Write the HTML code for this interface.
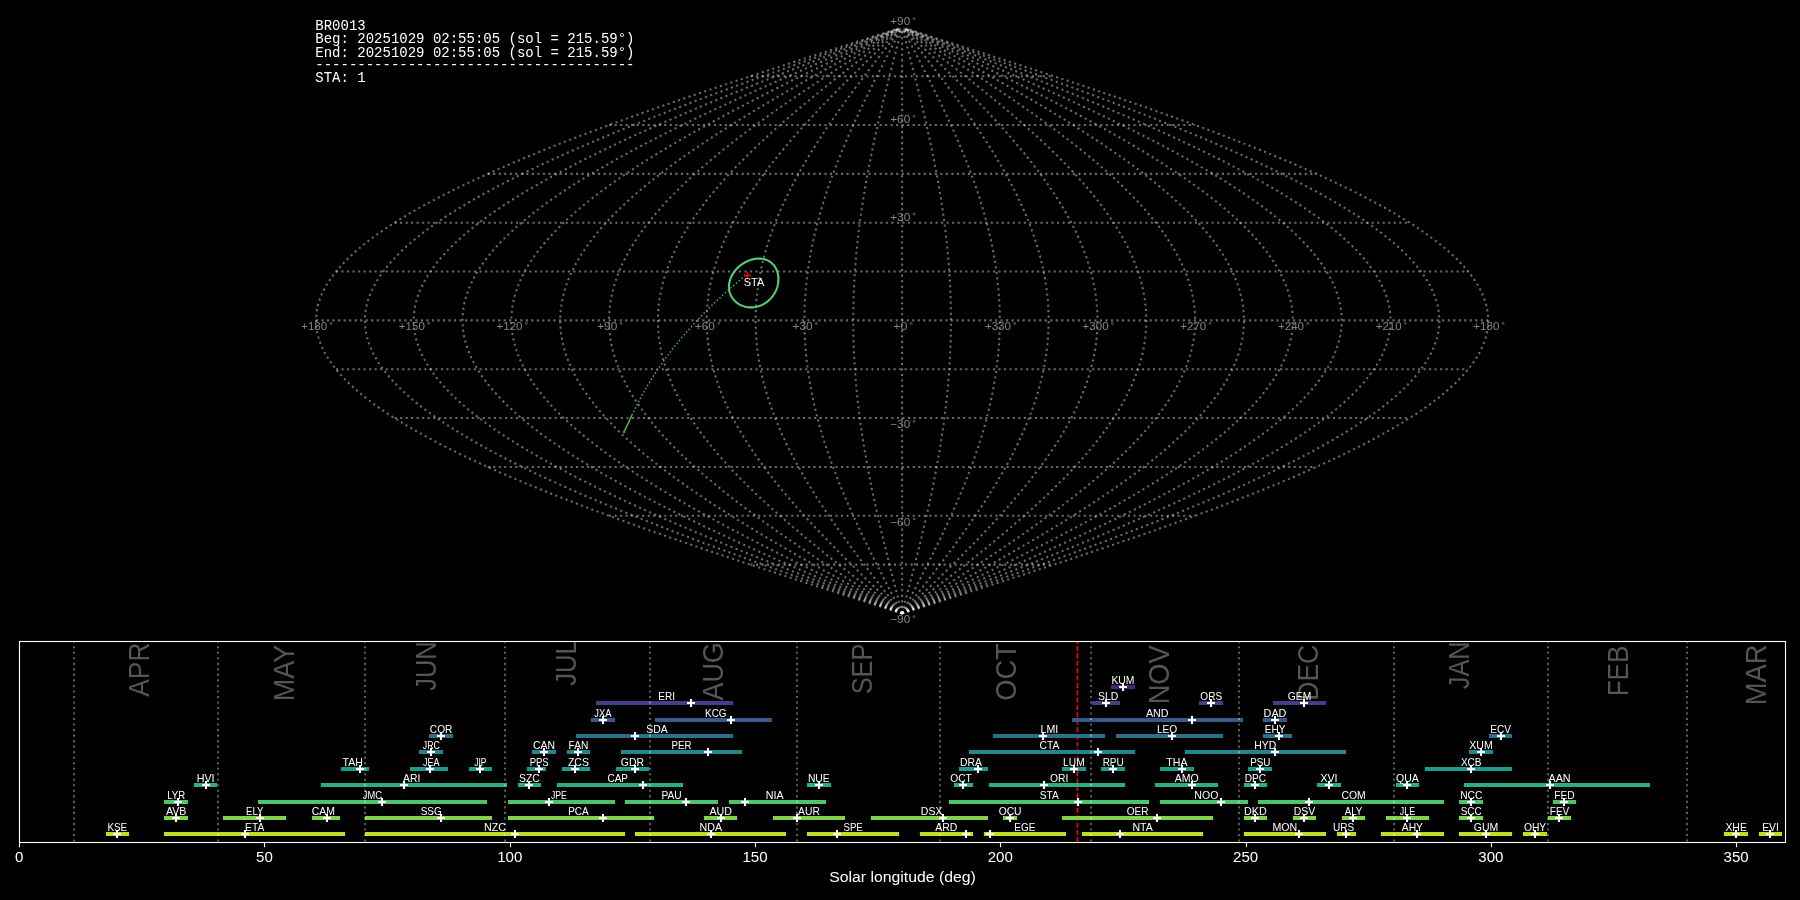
<!DOCTYPE html><html><head><meta charset="utf-8"><style>html,body{margin:0;padding:0;background:#000;width:1800px;height:900px;overflow:hidden}svg{display:block;will-change:transform}text{font-family:"Liberation Sans",sans-serif}</style></head><body>
<svg width="1800" height="900" viewBox="0 0 1800 900">
<rect width="1800" height="900" fill="#000"/>
<text x="315.3" y="30"  font-size="15.0" fill="#fff" textLength="50.4" lengthAdjust="spacingAndGlyphs" style="font-family:'Liberation Mono',monospace">BR0013</text>
<text x="315.3" y="43"  font-size="15.0" fill="#fff" textLength="319.2" lengthAdjust="spacingAndGlyphs" style="font-family:'Liberation Mono',monospace">Beg: 20251029 02:55:05 (sol = 215.59°)</text>
<text x="315.3" y="56.6"  font-size="15.0" fill="#fff" textLength="319.2" lengthAdjust="spacingAndGlyphs" style="font-family:'Liberation Mono',monospace">End: 20251029 02:55:05 (sol = 215.59°)</text>
<text x="315.3" y="69"  font-size="15.0" fill="#fff" textLength="319.2" lengthAdjust="spacingAndGlyphs" style="font-family:'Liberation Mono',monospace">--------------------------------------</text>
<text x="315.3" y="82"  font-size="15.0" fill="#fff" textLength="50.4" lengthAdjust="spacingAndGlyphs" style="font-family:'Liberation Mono',monospace">STA: 1</text>
<g fill="none" stroke="#ffffff" stroke-opacity="0.42" stroke-width="2.08" stroke-dasharray="2.083 3.4375">
<path d="M902.1,613.44 L912.31,610.19 L922.51,606.94 L932.71,603.69 L942.9,600.44 L953.08,597.19 L963.24,593.94 L973.39,590.69 L983.51,587.44 L993.61,584.19 L1003.68,580.94 L1013.71,577.69 L1023.72,574.44 L1033.69,571.19 L1043.62,567.94 L1053.5,564.69 L1063.34,561.45 L1073.13,558.2 L1082.87,554.95 L1092.55,551.7 L1102.18,548.45 L1111.74,545.2 L1121.24,541.95 L1130.68,538.7 L1140.04,535.45 L1149.34,532.2 L1158.56,528.95 L1167.7,525.7 L1176.76,522.45 L1185.73,519.2 L1194.62,515.95 L1203.42,512.7 L1212.14,509.45 L1220.75,506.2 L1229.27,502.95 L1237.69,499.7 L1246.01,496.45 L1254.22,493.2 L1262.33,489.95 L1270.33,486.7 L1278.22,483.45 L1285.99,480.2 L1293.64,476.95 L1301.18,473.7 L1308.6,470.45 L1315.89,467.2 L1323.05,463.96 L1330.09,460.71 L1337,457.46 L1343.78,454.21 L1350.42,450.96 L1356.93,447.71 L1363.3,444.46 L1369.53,441.21 L1375.62,437.96 L1381.56,434.71 L1387.36,431.46 L1393.01,428.21 L1398.51,424.96 L1403.86,421.71 L1409.06,418.46 L1414.11,415.21 L1419,411.96 L1423.73,408.71 L1428.31,405.46 L1432.72,402.21 L1436.98,398.96 L1441.07,395.71 L1445,392.46 L1448.76,389.21 L1452.36,385.96 L1455.79,382.71 L1459.05,379.46 L1462.14,376.21 L1465.07,372.96 L1467.82,369.71 L1470.4,366.47 L1472.81,363.22 L1475.05,359.97 L1477.11,356.72 L1479,353.47 L1480.71,350.22 L1482.25,346.97 L1483.61,343.72 L1484.79,340.47 L1485.8,337.22 L1486.63,333.97 L1487.28,330.72 L1487.76,327.47 L1488.06,324.22 L1488.18,320.97 L1488.12,317.72 L1487.88,314.47 L1487.47,311.22 L1486.88,307.97 L1486.11,304.72 L1485.17,301.47 L1484.04,298.22 L1482.74,294.97 L1481.27,291.72 L1479.62,288.47 L1477.79,285.22 L1475.79,281.97 L1473.62,278.72 L1471.27,275.47 L1468.75,272.22 L1466.05,268.98 L1463.19,265.73 L1460.16,262.48 L1456.95,259.23 L1453.58,255.98 L1450.04,252.73 L1446.33,249.48 L1442.46,246.23 L1438.43,242.98 L1434.23,239.73 L1429.87,236.48 L1425.35,233.23 L1420.68,229.98 L1415.84,226.73 L1410.85,223.48 L1405.7,220.23 L1400.41,216.98 L1394.96,213.73 L1389.36,210.48 L1383.61,207.23 L1377.72,203.98 L1371.68,200.73 L1365.5,197.48 L1359.18,194.23 L1352.72,190.98 L1346.13,187.73 L1339.39,184.48 L1332.53,181.23 L1325.54,177.98 L1318.42,174.73 L1311.17,171.49 L1303.79,168.24 L1296.3,164.99 L1288.69,161.74 L1280.95,158.49 L1273.11,155.24 L1265.15,151.99 L1257.08,148.74 L1248.9,145.49 L1240.62,142.24 L1232.24,138.99 L1223.75,135.74 L1215.17,132.49 L1206.49,129.24 L1197.72,125.99 L1188.86,122.74 L1179.91,119.49 L1170.88,116.24 L1161.77,112.99 L1152.58,109.74 L1143.31,106.49 L1133.97,103.24 L1124.56,99.99 L1115.08,96.74 L1105.54,93.49 L1095.93,90.24 L1086.27,86.99 L1076.55,83.74 L1066.78,80.49 L1056.96,77.24 L1047.09,73.99 L1037.17,70.75 L1027.22,67.5 L1017.23,64.25 L1007.2,61 L997.14,57.75 L987.05,54.5 L976.94,51.25 L966.8,48 L956.65,44.75 L946.47,41.5 L936.29,38.25 L926.09,35 L915.89,31.75 L905.68,28.5"/>
<path d="M902.1,613.44 L911.46,610.19 L920.81,606.94 L930.16,603.69 L939.5,600.44 L948.83,597.19 L958.15,593.94 L967.45,590.69 L976.72,587.44 L985.98,584.19 L995.21,580.94 L1004.41,577.69 L1013.58,574.44 L1022.72,571.19 L1031.82,567.94 L1040.88,564.69 L1049.9,561.45 L1058.88,558.2 L1067.8,554.95 L1076.68,551.7 L1085.5,548.45 L1094.27,545.2 L1102.98,541.95 L1111.63,538.7 L1120.22,535.45 L1128.73,532.2 L1137.18,528.95 L1145.56,525.7 L1153.87,522.45 L1162.1,519.2 L1170.25,515.95 L1178.31,512.7 L1186.3,509.45 L1194.2,506.2 L1202.01,502.95 L1209.73,499.7 L1217.35,496.45 L1224.88,493.2 L1232.31,489.95 L1239.64,486.7 L1246.87,483.45 L1254,480.2 L1261.01,476.95 L1267.92,473.7 L1274.72,470.45 L1281.41,467.2 L1287.98,463.96 L1294.43,460.71 L1300.76,457.46 L1306.97,454.21 L1313.06,450.96 L1319.03,447.71 L1324.87,444.46 L1330.58,441.21 L1336.16,437.96 L1341.61,434.71 L1346.92,431.46 L1352.1,428.21 L1357.14,424.96 L1362.05,421.71 L1366.82,418.46 L1371.44,415.21 L1375.92,411.96 L1380.26,408.71 L1384.46,405.46 L1388.5,402.21 L1392.4,398.96 L1396.15,395.71 L1399.75,392.46 L1403.2,389.21 L1406.5,385.96 L1409.65,382.71 L1412.64,379.46 L1415.47,376.21 L1418.15,372.96 L1420.68,369.71 L1423.04,366.47 L1425.25,363.22 L1427.3,359.97 L1429.19,356.72 L1430.92,353.47 L1432.49,350.22 L1433.9,346.97 L1435.15,343.72 L1436.23,340.47 L1437.16,337.22 L1437.92,333.97 L1438.52,330.72 L1438.95,327.47 L1439.23,324.22 L1439.34,320.97 L1439.28,317.72 L1439.07,314.47 L1438.69,311.22 L1438.15,307.97 L1437.44,304.72 L1436.58,301.47 L1435.55,298.22 L1434.36,294.97 L1433.01,291.72 L1431.49,288.47 L1429.82,285.22 L1427.98,281.97 L1425.99,278.72 L1423.84,275.47 L1421.53,272.22 L1419.06,268.98 L1416.43,265.73 L1413.65,262.48 L1410.71,259.23 L1407.62,255.98 L1404.38,252.73 L1400.98,249.48 L1397.43,246.23 L1393.73,242.98 L1389.89,239.73 L1385.89,236.48 L1381.75,233.23 L1377.46,229.98 L1373.03,226.73 L1368.45,223.48 L1363.74,220.23 L1358.88,216.98 L1353.88,213.73 L1348.75,210.48 L1343.48,207.23 L1338.08,203.98 L1332.55,200.73 L1326.88,197.48 L1321.09,194.23 L1315.17,190.98 L1309.12,187.73 L1302.95,184.48 L1296.66,181.23 L1290.25,177.98 L1283.72,174.73 L1277.08,171.49 L1270.32,168.24 L1263.45,164.99 L1256.47,161.74 L1249.38,158.49 L1242.19,155.24 L1234.89,151.99 L1227.5,148.74 L1220,145.49 L1212.41,142.24 L1204.72,138.99 L1196.95,135.74 L1189.08,132.49 L1181.12,129.24 L1173.08,125.99 L1164.96,122.74 L1156.76,119.49 L1148.48,116.24 L1140.13,112.99 L1131.71,109.74 L1123.21,106.49 L1114.65,103.24 L1106.02,99.99 L1097.33,96.74 L1088.59,93.49 L1079.78,90.24 L1070.92,86.99 L1062.01,83.74 L1053.06,80.49 L1044.05,77.24 L1035,73.99 L1025.92,70.75 L1016.79,67.5 L1007.63,64.25 L998.44,61 L989.22,57.75 L979.97,54.5 L970.7,51.25 L961.41,48 L952.1,44.75 L942.78,41.5 L933.44,38.25 L924.09,35 L914.74,31.75 L905.38,28.5"/>
<path d="M902.1,613.44 L910.61,610.19 L919.11,606.94 L927.61,603.69 L936.1,600.44 L944.58,597.19 L953.05,593.94 L961.51,590.69 L969.94,587.44 L978.36,584.19 L986.75,580.94 L995.11,577.69 L1003.45,574.44 L1011.76,571.19 L1020.03,567.94 L1028.27,564.69 L1036.47,561.45 L1044.62,558.2 L1052.74,554.95 L1060.81,551.7 L1068.83,548.45 L1076.8,545.2 L1084.72,541.95 L1092.58,538.7 L1100.39,535.45 L1108.13,532.2 L1115.81,528.95 L1123.43,525.7 L1130.98,522.45 L1138.46,519.2 L1145.87,515.95 L1153.2,512.7 L1160.46,509.45 L1167.64,506.2 L1174.74,502.95 L1181.76,499.7 L1188.69,496.45 L1195.54,493.2 L1202.29,489.95 L1208.96,486.7 L1215.53,483.45 L1222.01,480.2 L1228.39,476.95 L1234.67,473.7 L1240.85,470.45 L1246.92,467.2 L1252.9,463.96 L1258.76,460.71 L1264.52,457.46 L1270.17,454.21 L1275.7,450.96 L1281.13,447.71 L1286.43,444.46 L1291.62,441.21 L1296.7,437.96 L1301.65,434.71 L1306.48,431.46 L1311.19,428.21 L1315.78,424.96 L1320.24,421.71 L1324.57,418.46 L1328.77,415.21 L1332.85,411.96 L1336.79,408.71 L1340.6,405.46 L1344.28,402.21 L1347.83,398.96 L1351.24,395.71 L1354.51,392.46 L1357.65,389.21 L1360.65,385.96 L1363.51,382.71 L1366.23,379.46 L1368.8,376.21 L1371.24,372.96 L1373.53,369.71 L1375.69,366.47 L1377.69,363.22 L1379.56,359.97 L1381.28,356.72 L1382.85,353.47 L1384.28,350.22 L1385.56,346.97 L1386.69,343.72 L1387.68,340.47 L1388.52,337.22 L1389.21,333.97 L1389.75,330.72 L1390.15,327.47 L1390.4,324.22 L1390.5,320.97 L1390.45,317.72 L1390.25,314.47 L1389.91,311.22 L1389.42,307.97 L1388.78,304.72 L1387.99,301.47 L1387.05,298.22 L1385.97,294.97 L1384.74,291.72 L1383.37,288.47 L1381.84,285.22 L1380.18,281.97 L1378.36,278.72 L1376.41,275.47 L1374.31,272.22 L1372.06,268.98 L1369.67,265.73 L1367.15,262.48 L1364.48,259.23 L1361.67,255.98 L1358.72,252.73 L1355.63,249.48 L1352.4,246.23 L1349.04,242.98 L1345.54,239.73 L1341.91,236.48 L1338.14,233.23 L1334.25,229.98 L1330.22,226.73 L1326.06,223.48 L1321.77,220.23 L1317.35,216.98 L1312.81,213.73 L1308.15,210.48 L1303.36,207.23 L1298.45,203.98 L1293.42,200.73 L1288.27,197.48 L1283,194.23 L1277.62,190.98 L1272.12,187.73 L1266.51,184.48 L1260.79,181.23 L1254.96,177.98 L1249.03,174.73 L1242.99,171.49 L1236.85,168.24 L1230.6,164.99 L1224.25,161.74 L1217.81,158.49 L1211.27,155.24 L1204.64,151.99 L1197.92,148.74 L1191.1,145.49 L1184.2,142.24 L1177.21,138.99 L1170.14,135.74 L1162.99,132.49 L1155.76,129.24 L1148.45,125.99 L1141.07,122.74 L1133.61,119.49 L1126.09,116.24 L1118.49,112.99 L1110.83,109.74 L1103.11,106.49 L1095.33,103.24 L1087.48,99.99 L1079.58,96.74 L1071.63,93.49 L1063.63,90.24 L1055.58,86.99 L1047.48,83.74 L1039.33,80.49 L1031.15,77.24 L1022.92,73.99 L1014.66,70.75 L1006.37,67.5 L998.04,64.25 L989.68,61 L981.3,57.75 L972.89,54.5 L964.47,51.25 L956.02,48 L947.56,44.75 L939.08,41.5 L930.59,38.25 L922.09,35 L913.59,31.75 L905.08,28.5"/>
<path d="M902.1,613.44 L909.76,610.19 L917.41,606.94 L925.06,603.69 L932.7,600.44 L940.34,597.19 L947.96,593.94 L955.57,590.69 L963.16,587.44 L970.73,584.19 L978.28,580.94 L985.81,577.69 L993.31,574.44 L1000.79,571.19 L1008.24,567.94 L1015.65,564.69 L1023.03,561.45 L1030.37,558.2 L1037.68,554.95 L1044.94,551.7 L1052.16,548.45 L1059.33,545.2 L1066.46,541.95 L1073.53,538.7 L1080.56,535.45 L1087.53,532.2 L1094.44,528.95 L1101.3,525.7 L1108.09,522.45 L1114.82,519.2 L1121.49,515.95 L1128.09,512.7 L1134.63,509.45 L1141.09,506.2 L1147.48,502.95 L1153.79,499.7 L1160.03,496.45 L1166.19,493.2 L1172.27,489.95 L1178.27,486.7 L1184.19,483.45 L1190.02,480.2 L1195.76,476.95 L1201.41,473.7 L1206.97,470.45 L1212.44,467.2 L1217.82,463.96 L1223.1,460.71 L1228.28,457.46 L1233.36,454.21 L1238.34,450.96 L1243.22,447.71 L1248,444.46 L1252.67,441.21 L1257.24,437.96 L1261.7,434.71 L1266.04,431.46 L1270.28,428.21 L1274.41,424.96 L1278.42,421.71 L1282.32,418.46 L1286.11,415.21 L1289.77,411.96 L1293.32,408.71 L1296.75,405.46 L1300.07,402.21 L1303.26,398.96 L1306.33,395.71 L1309.27,392.46 L1312.09,389.21 L1314.79,385.96 L1317.37,382.71 L1319.81,379.46 L1322.13,376.21 L1324.33,372.96 L1326.39,369.71 L1328.33,366.47 L1330.13,363.22 L1331.81,359.97 L1333.36,356.72 L1334.77,353.47 L1336.06,350.22 L1337.21,346.97 L1338.23,343.72 L1339.12,340.47 L1339.88,337.22 L1340.5,333.97 L1340.99,330.72 L1341.34,327.47 L1341.57,324.22 L1341.66,320.97 L1341.61,317.72 L1341.44,314.47 L1341.13,311.22 L1340.68,307.97 L1340.11,304.72 L1339.4,301.47 L1338.56,298.22 L1337.58,294.97 L1336.48,291.72 L1335.24,288.47 L1333.87,285.22 L1332.37,281.97 L1330.74,278.72 L1328.98,275.47 L1327.09,272.22 L1325.07,268.98 L1322.92,265.73 L1320.64,262.48 L1318.24,259.23 L1315.71,255.98 L1313.06,252.73 L1310.28,249.48 L1307.37,246.23 L1304.35,242.98 L1301.2,239.73 L1297.93,236.48 L1294.54,233.23 L1291.03,229.98 L1287.41,226.73 L1283.66,223.48 L1279.8,220.23 L1275.83,216.98 L1271.74,213.73 L1267.54,210.48 L1263.23,207.23 L1258.81,203.98 L1254.29,200.73 L1249.65,197.48 L1244.91,194.23 L1240.07,190.98 L1235.12,187.73 L1230.07,184.48 L1224.92,181.23 L1219.68,177.98 L1214.34,174.73 L1208.9,171.49 L1203.37,168.24 L1197.75,164.99 L1192.04,161.74 L1186.24,158.49 L1180.36,155.24 L1174.39,151.99 L1168.33,148.74 L1162.2,145.49 L1155.99,142.24 L1149.7,138.99 L1143.34,135.74 L1136.9,132.49 L1130.39,129.24 L1123.81,125.99 L1117.17,122.74 L1110.46,119.49 L1103.69,116.24 L1096.85,112.99 L1089.96,109.74 L1083.01,106.49 L1076,103.24 L1068.95,99.99 L1061.84,96.74 L1054.68,93.49 L1047.48,90.24 L1040.23,86.99 L1032.94,83.74 L1025.61,80.49 L1018.24,77.24 L1010.84,73.99 L1003.41,70.75 L995.94,67.5 L988.45,64.25 L980.92,61 L973.38,57.75 L965.81,54.5 L958.23,51.25 L950.63,48 L943.01,44.75 L935.38,41.5 L927.74,38.25 L920.09,35 L912.44,31.75 L904.79,28.5"/>
<path d="M902.1,613.44 L908.91,610.19 L915.71,606.94 L922.51,603.69 L929.3,600.44 L936.09,597.19 L942.86,593.94 L949.62,590.69 L956.37,587.44 L963.1,584.19 L969.82,580.94 L976.51,577.69 L983.18,574.44 L989.82,571.19 L996.44,567.94 L1003.03,564.69 L1009.59,561.45 L1016.12,558.2 L1022.61,554.95 L1029.07,551.7 L1035.48,548.45 L1041.86,545.2 L1048.2,541.95 L1054.49,538.7 L1060.73,535.45 L1066.92,532.2 L1073.07,528.95 L1079.16,525.7 L1085.2,522.45 L1091.19,519.2 L1097.12,515.95 L1102.98,512.7 L1108.79,509.45 L1114.53,506.2 L1120.21,502.95 L1125.83,499.7 L1131.37,496.45 L1136.85,493.2 L1142.25,489.95 L1147.59,486.7 L1152.84,483.45 L1158.02,480.2 L1163.13,476.95 L1168.15,473.7 L1173.1,470.45 L1177.96,467.2 L1182.74,463.96 L1187.43,460.71 L1192.04,457.46 L1196.55,454.21 L1200.98,450.96 L1205.32,447.71 L1209.57,444.46 L1213.72,441.21 L1217.78,437.96 L1221.74,434.71 L1225.61,431.46 L1229.37,428.21 L1233.04,424.96 L1236.61,421.71 L1240.07,418.46 L1243.44,415.21 L1246.7,411.96 L1249.85,408.71 L1252.9,405.46 L1255.85,402.21 L1258.68,398.96 L1261.41,395.71 L1264.03,392.46 L1266.54,389.21 L1268.94,385.96 L1271.23,382.71 L1273.4,379.46 L1275.46,376.21 L1277.41,372.96 L1279.25,369.71 L1280.97,366.47 L1282.57,363.22 L1284.07,359.97 L1285.44,356.72 L1286.7,353.47 L1287.84,350.22 L1288.86,346.97 L1289.77,343.72 L1290.56,340.47 L1291.23,337.22 L1291.79,333.97 L1292.22,330.72 L1292.54,327.47 L1292.74,324.22 L1292.82,320.97 L1292.78,317.72 L1292.62,314.47 L1292.35,311.22 L1291.95,307.97 L1291.44,304.72 L1290.81,301.47 L1290.06,298.22 L1289.2,294.97 L1288.21,291.72 L1287.11,288.47 L1285.89,285.22 L1284.56,281.97 L1283.11,278.72 L1281.55,275.47 L1279.86,272.22 L1278.07,268.98 L1276.16,265.73 L1274.14,262.48 L1272,259.23 L1269.75,255.98 L1267.39,252.73 L1264.92,249.48 L1262.34,246.23 L1259.65,242.98 L1256.85,239.73 L1253.95,236.48 L1250.94,233.23 L1247.82,229.98 L1244.59,226.73 L1241.27,223.48 L1237.84,220.23 L1234.3,216.98 L1230.67,213.73 L1226.94,210.48 L1223.11,207.23 L1219.18,203.98 L1215.15,200.73 L1211.03,197.48 L1206.82,194.23 L1202.51,190.98 L1198.12,187.73 L1193.63,184.48 L1189.05,181.23 L1184.39,177.98 L1179.64,174.73 L1174.81,171.49 L1169.9,168.24 L1164.9,164.99 L1159.82,161.74 L1154.67,158.49 L1149.44,155.24 L1144.13,151.99 L1138.75,148.74 L1133.3,145.49 L1127.78,142.24 L1122.19,138.99 L1116.53,135.74 L1110.81,132.49 L1105.03,129.24 L1099.18,125.99 L1093.27,122.74 L1087.31,119.49 L1081.29,116.24 L1075.21,112.99 L1069.09,109.74 L1062.91,106.49 L1056.68,103.24 L1050.41,99.99 L1044.09,96.74 L1037.73,93.49 L1031.32,90.24 L1024.88,86.99 L1018.4,83.74 L1011.89,80.49 L1005.34,77.24 L998.76,73.99 L992.15,70.75 L985.51,67.5 L978.85,64.25 L972.17,61 L965.46,57.75 L958.74,54.5 L951.99,51.25 L945.24,48 L938.46,44.75 L931.68,41.5 L924.89,38.25 L918.09,35 L911.29,31.75 L904.49,28.5"/>
<path d="M902.1,613.44 L908.06,610.19 L914.01,606.94 L919.96,603.69 L925.9,600.44 L931.84,597.19 L937.77,593.94 L943.68,590.69 L949.59,587.44 L955.48,584.19 L961.35,580.94 L967.21,577.69 L973.04,574.44 L978.86,571.19 L984.65,567.94 L990.42,564.69 L996.16,561.45 L1001.87,558.2 L1007.55,554.95 L1013.2,551.7 L1018.81,548.45 L1024.39,545.2 L1029.93,541.95 L1035.44,538.7 L1040.9,535.45 L1046.32,532.2 L1051.7,528.95 L1057.03,525.7 L1062.32,522.45 L1067.55,519.2 L1072.74,515.95 L1077.87,512.7 L1082.95,509.45 L1087.98,506.2 L1092.95,502.95 L1097.86,499.7 L1102.71,496.45 L1107.51,493.2 L1112.23,489.95 L1116.9,486.7 L1121.5,483.45 L1126.03,480.2 L1130.5,476.95 L1134.9,473.7 L1139.22,470.45 L1143.48,467.2 L1147.66,463.96 L1151.76,460.71 L1155.79,457.46 L1159.75,454.21 L1163.62,450.96 L1167.42,447.71 L1171.13,444.46 L1174.77,441.21 L1178.32,437.96 L1181.79,434.71 L1185.17,431.46 L1188.46,428.21 L1191.67,424.96 L1194.8,421.71 L1197.83,418.46 L1200.77,415.21 L1203.62,411.96 L1206.38,408.71 L1209.05,405.46 L1211.63,402.21 L1214.11,398.96 L1216.5,395.71 L1218.79,392.46 L1220.98,389.21 L1223.08,385.96 L1225.08,382.71 L1226.99,379.46 L1228.79,376.21 L1230.5,372.96 L1232.1,369.71 L1233.61,366.47 L1235.02,363.22 L1236.32,359.97 L1237.52,356.72 L1238.62,353.47 L1239.62,350.22 L1240.52,346.97 L1241.31,343.72 L1242,340.47 L1242.59,337.22 L1243.08,333.97 L1243.46,330.72 L1243.73,327.47 L1243.91,324.22 L1243.98,320.97 L1243.94,317.72 L1243.81,314.47 L1243.57,311.22 L1243.22,307.97 L1242.77,304.72 L1242.22,301.47 L1241.57,298.22 L1240.81,294.97 L1239.95,291.72 L1238.99,288.47 L1237.92,285.22 L1236.75,281.97 L1235.48,278.72 L1234.11,275.47 L1232.64,272.22 L1231.07,268.98 L1229.4,265.73 L1227.63,262.48 L1225.76,259.23 L1223.8,255.98 L1221.73,252.73 L1219.57,249.48 L1217.31,246.23 L1214.96,242.98 L1212.51,239.73 L1209.97,236.48 L1207.33,233.23 L1204.6,229.98 L1201.78,226.73 L1198.87,223.48 L1195.87,220.23 L1192.78,216.98 L1189.6,213.73 L1186.33,210.48 L1182.98,207.23 L1179.54,203.98 L1176.02,200.73 L1172.42,197.48 L1168.73,194.23 L1164.96,190.98 L1161.11,187.73 L1157.19,184.48 L1153.19,181.23 L1149.11,177.98 L1144.95,174.73 L1140.72,171.49 L1136.42,168.24 L1132.05,164.99 L1127.61,161.74 L1123.1,158.49 L1118.52,155.24 L1113.88,151.99 L1109.17,148.74 L1104.4,145.49 L1099.57,142.24 L1094.68,138.99 L1089.73,135.74 L1084.72,132.49 L1079.66,129.24 L1074.54,125.99 L1069.38,122.74 L1064.16,119.49 L1058.89,116.24 L1053.57,112.99 L1048.21,109.74 L1042.81,106.49 L1037.36,103.24 L1031.87,99.99 L1026.34,96.74 L1020.77,93.49 L1015.17,90.24 L1009.53,86.99 L1003.86,83.74 L998.16,80.49 L992.43,77.24 L986.68,73.99 L980.89,70.75 L975.09,67.5 L969.26,64.25 L963.41,61 L957.54,57.75 L951.66,54.5 L945.76,51.25 L939.84,48 L933.92,44.75 L927.98,41.5 L922.04,38.25 L916.1,35 L910.14,31.75 L904.19,28.5"/>
<path d="M902.1,613.44 L907.2,610.19 L912.31,606.94 L917.41,603.69 L922.5,600.44 L927.59,597.19 L932.67,593.94 L937.74,590.69 L942.8,587.44 L947.85,584.19 L952.89,580.94 L957.91,577.69 L962.91,574.44 L967.89,571.19 L972.86,567.94 L977.8,564.69 L982.72,561.45 L987.61,558.2 L992.48,554.95 L997.33,551.7 L1002.14,548.45 L1006.92,545.2 L1011.67,541.95 L1016.39,538.7 L1021.07,535.45 L1025.72,532.2 L1030.33,528.95 L1034.9,525.7 L1039.43,522.45 L1043.92,519.2 L1048.36,515.95 L1052.76,512.7 L1057.12,509.45 L1061.43,506.2 L1065.69,502.95 L1069.9,499.7 L1074.05,496.45 L1078.16,493.2 L1082.22,489.95 L1086.21,486.7 L1090.16,483.45 L1094.04,480.2 L1097.87,476.95 L1101.64,473.7 L1105.35,470.45 L1108.99,467.2 L1112.58,463.96 L1116.1,460.71 L1119.55,457.46 L1122.94,454.21 L1126.26,450.96 L1129.52,447.71 L1132.7,444.46 L1135.81,441.21 L1138.86,437.96 L1141.83,434.71 L1144.73,431.46 L1147.55,428.21 L1150.31,424.96 L1152.98,421.71 L1155.58,418.46 L1158.1,415.21 L1160.55,411.96 L1162.92,408.71 L1165.2,405.46 L1167.41,402.21 L1169.54,398.96 L1171.58,395.71 L1173.55,392.46 L1175.43,389.21 L1177.23,385.96 L1178.94,382.71 L1180.58,379.46 L1182.12,376.21 L1183.58,372.96 L1184.96,369.71 L1186.25,366.47 L1187.46,363.22 L1188.57,359.97 L1189.61,356.72 L1190.55,353.47 L1191.41,350.22 L1192.17,346.97 L1192.85,343.72 L1193.45,340.47 L1193.95,337.22 L1194.37,333.97 L1194.69,330.72 L1194.93,327.47 L1195.08,324.22 L1195.14,320.97 L1195.11,317.72 L1194.99,314.47 L1194.79,311.22 L1194.49,307.97 L1194.11,304.72 L1193.63,301.47 L1193.07,298.22 L1192.42,294.97 L1191.68,291.72 L1190.86,288.47 L1189.95,285.22 L1188.95,281.97 L1187.86,278.72 L1186.68,275.47 L1185.42,272.22 L1184.08,268.98 L1182.64,265.73 L1181.13,262.48 L1179.53,259.23 L1177.84,255.98 L1176.07,252.73 L1174.22,249.48 L1172.28,246.23 L1170.26,242.98 L1168.17,239.73 L1165.99,236.48 L1163.73,233.23 L1161.39,229.98 L1158.97,226.73 L1156.47,223.48 L1153.9,220.23 L1151.25,216.98 L1148.53,213.73 L1145.73,210.48 L1142.86,207.23 L1139.91,203.98 L1136.89,200.73 L1133.8,197.48 L1130.64,194.23 L1127.41,190.98 L1124.11,187.73 L1120.75,184.48 L1117.32,181.23 L1113.82,177.98 L1110.26,174.73 L1106.63,171.49 L1102.95,168.24 L1099.2,164.99 L1095.39,161.74 L1091.53,158.49 L1087.6,155.24 L1083.62,151.99 L1079.59,148.74 L1075.5,145.49 L1071.36,142.24 L1067.17,138.99 L1062.93,135.74 L1058.63,132.49 L1054.29,129.24 L1049.91,125.99 L1045.48,122.74 L1041.01,119.49 L1036.49,116.24 L1031.94,112.99 L1027.34,109.74 L1022.71,106.49 L1018.04,103.24 L1013.33,99.99 L1008.59,96.74 L1003.82,93.49 L999.02,90.24 L994.19,86.99 L989.33,83.74 L984.44,80.49 L979.53,77.24 L974.59,73.99 L969.64,70.75 L964.66,67.5 L959.66,64.25 L954.65,61 L949.62,57.75 L944.58,54.5 L939.52,51.25 L934.45,48 L929.37,44.75 L924.29,41.5 L919.19,38.25 L914.1,35 L908.99,31.75 L903.89,28.5"/>
<path d="M902.1,613.44 L906.35,610.19 L910.61,606.94 L914.86,603.69 L919.1,600.44 L923.34,597.19 L927.58,593.94 L931.8,590.69 L936.02,587.44 L940.23,584.19 L944.42,580.94 L948.61,577.69 L952.77,574.44 L956.93,571.19 L961.06,567.94 L965.18,564.69 L969.28,561.45 L973.36,558.2 L977.42,554.95 L981.45,551.7 L985.47,548.45 L989.45,545.2 L993.41,541.95 L997.34,538.7 L1001.24,535.45 L1005.12,532.2 L1008.96,528.95 L1012.77,525.7 L1016.54,522.45 L1020.28,519.2 L1023.98,515.95 L1027.65,512.7 L1031.28,509.45 L1034.87,506.2 L1038.42,502.95 L1041.93,499.7 L1045.4,496.45 L1048.82,493.2 L1052.2,489.95 L1055.53,486.7 L1058.81,483.45 L1062.05,480.2 L1065.24,476.95 L1068.38,473.7 L1071.47,470.45 L1074.51,467.2 L1077.5,463.96 L1080.43,460.71 L1083.31,457.46 L1086.13,454.21 L1088.9,450.96 L1091.61,447.71 L1094.27,444.46 L1096.86,441.21 L1099.4,437.96 L1101.88,434.71 L1104.29,431.46 L1106.65,428.21 L1108.94,424.96 L1111.17,421.71 L1113.33,418.46 L1115.44,415.21 L1117.47,411.96 L1119.45,408.71 L1121.35,405.46 L1123.19,402.21 L1124.96,398.96 L1126.67,395.71 L1128.31,392.46 L1129.87,389.21 L1131.37,385.96 L1132.8,382.71 L1134.16,379.46 L1135.45,376.21 L1136.67,372.96 L1137.82,369.71 L1138.89,366.47 L1139.9,363.22 L1140.83,359.97 L1141.69,356.72 L1142.47,353.47 L1143.19,350.22 L1143.83,346.97 L1144.39,343.72 L1144.89,340.47 L1145.31,337.22 L1145.65,333.97 L1145.93,330.72 L1146.12,327.47 L1146.25,324.22 L1146.3,320.97 L1146.27,317.72 L1146.18,314.47 L1146,311.22 L1145.76,307.97 L1145.44,304.72 L1145.04,301.47 L1144.58,298.22 L1144.04,294.97 L1143.42,291.72 L1142.73,288.47 L1141.97,285.22 L1141.14,281.97 L1140.23,278.72 L1139.25,275.47 L1138.2,272.22 L1137.08,268.98 L1135.89,265.73 L1134.62,262.48 L1133.29,259.23 L1131.88,255.98 L1130.41,252.73 L1128.86,249.48 L1127.25,246.23 L1125.57,242.98 L1123.82,239.73 L1122.01,236.48 L1120.12,233.23 L1118.17,229.98 L1116.16,226.73 L1114.08,223.48 L1111.93,220.23 L1109.73,216.98 L1107.46,213.73 L1105.12,210.48 L1102.73,207.23 L1100.27,203.98 L1097.76,200.73 L1095.18,197.48 L1092.55,194.23 L1089.86,190.98 L1087.11,187.73 L1084.31,184.48 L1081.45,181.23 L1078.53,177.98 L1075.56,174.73 L1072.54,171.49 L1069.47,168.24 L1066.35,164.99 L1063.18,161.74 L1059.96,158.49 L1056.69,155.24 L1053.37,151.99 L1050.01,148.74 L1046.6,145.49 L1043.15,142.24 L1039.66,138.99 L1036.12,135.74 L1032.54,132.49 L1028.93,129.24 L1025.27,125.99 L1021.58,122.74 L1017.86,119.49 L1014.09,116.24 L1010.3,112.99 L1006.47,109.74 L1002.6,106.49 L998.71,103.24 L994.79,99.99 L990.84,96.74 L986.87,93.49 L982.86,90.24 L978.84,86.99 L974.79,83.74 L970.72,80.49 L966.62,77.24 L962.51,73.99 L958.38,70.75 L954.23,67.5 L950.07,64.25 L945.89,61 L941.7,57.75 L937.5,54.5 L933.28,51.25 L929.06,48 L924.83,44.75 L920.59,41.5 L916.35,38.25 L912.1,35 L907.85,31.75 L903.59,28.5"/>
<path d="M902.1,613.44 L905.5,610.19 L908.9,606.94 L912.3,603.69 L915.7,600.44 L919.09,597.19 L922.48,593.94 L925.86,590.69 L929.24,587.44 L932.6,584.19 L935.96,580.94 L939.3,577.69 L942.64,574.44 L945.96,571.19 L949.27,567.94 L952.57,564.69 L955.85,561.45 L959.11,558.2 L962.36,554.95 L965.58,551.7 L968.79,548.45 L971.98,545.2 L975.15,541.95 L978.29,538.7 L981.41,535.45 L984.51,532.2 L987.59,528.95 L990.63,525.7 L993.65,522.45 L996.64,519.2 L999.61,515.95 L1002.54,512.7 L1005.45,509.45 L1008.32,506.2 L1011.16,502.95 L1013.96,499.7 L1016.74,496.45 L1019.47,493.2 L1022.18,489.95 L1024.84,486.7 L1027.47,483.45 L1030.06,480.2 L1032.61,476.95 L1035.13,473.7 L1037.6,470.45 L1040.03,467.2 L1042.42,463.96 L1044.76,460.71 L1047.07,457.46 L1049.33,454.21 L1051.54,450.96 L1053.71,447.71 L1055.83,444.46 L1057.91,441.21 L1059.94,437.96 L1061.92,434.71 L1063.85,431.46 L1065.74,428.21 L1067.57,424.96 L1069.35,421.71 L1071.09,418.46 L1072.77,415.21 L1074.4,411.96 L1075.98,408.71 L1077.5,405.46 L1078.97,402.21 L1080.39,398.96 L1081.76,395.71 L1083.07,392.46 L1084.32,389.21 L1085.52,385.96 L1086.66,382.71 L1087.75,379.46 L1088.78,376.21 L1089.76,372.96 L1090.67,369.71 L1091.53,366.47 L1092.34,363.22 L1093.08,359.97 L1093.77,356.72 L1094.4,353.47 L1094.97,350.22 L1095.48,346.97 L1095.94,343.72 L1096.33,340.47 L1096.67,337.22 L1096.94,333.97 L1097.16,330.72 L1097.32,327.47 L1097.42,324.22 L1097.46,320.97 L1097.44,317.72 L1097.36,314.47 L1097.22,311.22 L1097.03,307.97 L1096.77,304.72 L1096.46,301.47 L1096.08,298.22 L1095.65,294.97 L1095.16,291.72 L1094.61,288.47 L1094,285.22 L1093.33,281.97 L1092.61,278.72 L1091.82,275.47 L1090.98,272.22 L1090.08,268.98 L1089.13,265.73 L1088.12,262.48 L1087.05,259.23 L1085.93,255.98 L1084.75,252.73 L1083.51,249.48 L1082.22,246.23 L1080.88,242.98 L1079.48,239.73 L1078.02,236.48 L1076.52,233.23 L1074.96,229.98 L1073.35,226.73 L1071.68,223.48 L1069.97,220.23 L1068.2,216.98 L1066.39,213.73 L1064.52,210.48 L1062.6,207.23 L1060.64,203.98 L1058.63,200.73 L1056.57,197.48 L1054.46,194.23 L1052.31,190.98 L1050.11,187.73 L1047.86,184.48 L1045.58,181.23 L1043.25,177.98 L1040.87,174.73 L1038.46,171.49 L1036,168.24 L1033.5,164.99 L1030.96,161.74 L1028.38,158.49 L1025.77,155.24 L1023.12,151.99 L1020.43,148.74 L1017.7,145.49 L1014.94,142.24 L1012.15,138.99 L1009.32,135.74 L1006.46,132.49 L1003.56,129.24 L1000.64,125.99 L997.69,122.74 L994.7,119.49 L991.69,116.24 L988.66,112.99 L985.59,109.74 L982.5,106.49 L979.39,103.24 L976.25,99.99 L973.09,96.74 L969.91,93.49 L966.71,90.24 L963.49,86.99 L960.25,83.74 L956.99,80.49 L953.72,77.24 L950.43,73.99 L947.12,70.75 L943.81,67.5 L940.48,64.25 L937.13,61 L933.78,57.75 L930.42,54.5 L927.05,51.25 L923.67,48 L920.28,44.75 L916.89,41.5 L913.5,38.25 L910.1,35 L906.7,31.75 L903.29,28.5"/>
<path d="M902.1,613.44 L904.65,610.19 L907.2,606.94 L909.75,603.69 L912.3,600.44 L914.85,597.19 L917.39,593.94 L919.92,590.69 L922.45,587.44 L924.98,584.19 L927.49,580.94 L930,577.69 L932.5,574.44 L935,571.19 L937.48,567.94 L939.95,564.69 L942.41,561.45 L944.86,558.2 L947.29,554.95 L949.71,551.7 L952.12,548.45 L954.51,545.2 L956.89,541.95 L959.24,538.7 L961.59,535.45 L963.91,532.2 L966.21,528.95 L968.5,525.7 L970.76,522.45 L973.01,519.2 L975.23,515.95 L977.43,512.7 L979.61,509.45 L981.76,506.2 L983.89,502.95 L986,499.7 L988.08,496.45 L990.13,493.2 L992.16,489.95 L994.16,486.7 L996.13,483.45 L998.07,480.2 L999.99,476.95 L1001.87,473.7 L1003.72,470.45 L1005.55,467.2 L1007.34,463.96 L1009.1,460.71 L1010.83,457.46 L1012.52,454.21 L1014.18,450.96 L1015.81,447.71 L1017.4,444.46 L1018.96,441.21 L1020.48,437.96 L1021.97,434.71 L1023.41,431.46 L1024.83,428.21 L1026.2,424.96 L1027.54,421.71 L1028.84,418.46 L1030.1,415.21 L1031.32,411.96 L1032.51,408.71 L1033.65,405.46 L1034.76,402.21 L1035.82,398.96 L1036.84,395.71 L1037.82,392.46 L1038.76,389.21 L1039.66,385.96 L1040.52,382.71 L1041.34,379.46 L1042.11,376.21 L1042.84,372.96 L1043.53,369.71 L1044.18,366.47 L1044.78,363.22 L1045.34,359.97 L1045.85,356.72 L1046.32,353.47 L1046.75,350.22 L1047.14,346.97 L1047.48,343.72 L1047.77,340.47 L1048.03,337.22 L1048.23,333.97 L1048.4,330.72 L1048.51,327.47 L1048.59,324.22 L1048.62,320.97 L1048.6,317.72 L1048.55,314.47 L1048.44,311.22 L1048.29,307.97 L1048.1,304.72 L1047.87,301.47 L1047.59,298.22 L1047.26,294.97 L1046.89,291.72 L1046.48,288.47 L1046.02,285.22 L1045.52,281.97 L1044.98,278.72 L1044.39,275.47 L1043.76,272.22 L1043.09,268.98 L1042.37,265.73 L1041.61,262.48 L1040.81,259.23 L1039.97,255.98 L1039.09,252.73 L1038.16,249.48 L1037.19,246.23 L1036.18,242.98 L1035.13,239.73 L1034.04,236.48 L1032.91,233.23 L1031.74,229.98 L1030.54,226.73 L1029.29,223.48 L1028,220.23 L1026.68,216.98 L1025.31,213.73 L1023.91,210.48 L1022.48,207.23 L1021,203.98 L1019.5,200.73 L1017.95,197.48 L1016.37,194.23 L1014.76,190.98 L1013.11,187.73 L1011.42,184.48 L1009.71,181.23 L1007.96,177.98 L1006.18,174.73 L1004.37,171.49 L1002.52,168.24 L1000.65,164.99 L998.75,161.74 L996.81,158.49 L994.85,155.24 L992.86,151.99 L990.84,148.74 L988.8,145.49 L986.73,142.24 L984.63,138.99 L982.51,135.74 L980.37,132.49 L978.2,129.24 L976,125.99 L973.79,122.74 L971.55,119.49 L969.3,116.24 L967.02,112.99 L964.72,109.74 L962.4,106.49 L960.07,103.24 L957.72,99.99 L955.35,96.74 L952.96,93.49 L950.56,90.24 L948.14,86.99 L945.71,83.74 L943.27,80.49 L940.81,77.24 L938.35,73.99 L935.87,70.75 L933.38,67.5 L930.88,64.25 L928.37,61 L925.86,57.75 L923.34,54.5 L920.81,51.25 L918.28,48 L915.74,44.75 L913.19,41.5 L910.65,38.25 L908.1,35 L905.55,31.75 L903,28.5"/>
<path d="M902.1,613.44 L903.8,610.19 L905.5,606.94 L907.2,603.69 L908.9,600.44 L910.6,597.19 L912.29,593.94 L913.98,590.69 L915.67,587.44 L917.35,584.19 L919.03,580.94 L920.7,577.69 L922.37,574.44 L924.03,571.19 L925.69,567.94 L927.33,564.69 L928.97,561.45 L930.6,558.2 L932.23,554.95 L933.84,551.7 L935.45,548.45 L937.04,545.2 L938.62,541.95 L940.2,538.7 L941.76,535.45 L943.31,532.2 L944.84,528.95 L946.37,525.7 L947.88,522.45 L949.37,519.2 L950.85,515.95 L952.32,512.7 L953.77,509.45 L955.21,506.2 L956.63,502.95 L958.03,499.7 L959.42,496.45 L960.79,493.2 L962.14,489.95 L963.47,486.7 L964.79,483.45 L966.08,480.2 L967.36,476.95 L968.61,473.7 L969.85,470.45 L971.06,467.2 L972.26,463.96 L973.43,460.71 L974.58,457.46 L975.71,454.21 L976.82,450.96 L977.91,447.71 L978.97,444.46 L980,441.21 L981.02,437.96 L982.01,434.71 L982.98,431.46 L983.92,428.21 L984.84,424.96 L985.73,421.71 L986.59,418.46 L987.43,415.21 L988.25,411.96 L989.04,408.71 L989.8,405.46 L990.54,402.21 L991.25,398.96 L991.93,395.71 L992.58,392.46 L993.21,389.21 L993.81,385.96 L994.38,382.71 L994.93,379.46 L995.44,376.21 L995.93,372.96 L996.39,369.71 L996.82,366.47 L997.22,363.22 L997.59,359.97 L997.94,356.72 L998.25,353.47 L998.54,350.22 L998.79,346.97 L999.02,343.72 L999.22,340.47 L999.38,337.22 L999.52,333.97 L999.63,330.72 L999.71,327.47 L999.76,324.22 L999.78,320.97 L999.77,317.72 L999.73,314.47 L999.66,311.22 L999.56,307.97 L999.44,304.72 L999.28,301.47 L999.09,298.22 L998.87,294.97 L998.63,291.72 L998.35,288.47 L998.05,285.22 L997.72,281.97 L997.35,278.72 L996.96,275.47 L996.54,272.22 L996.09,268.98 L995.61,265.73 L995.11,262.48 L994.58,259.23 L994.01,255.98 L993.42,252.73 L992.81,249.48 L992.16,246.23 L991.49,242.98 L990.79,239.73 L990.06,236.48 L989.31,233.23 L988.53,229.98 L987.72,226.73 L986.89,223.48 L986.03,220.23 L985.15,216.98 L984.24,213.73 L983.31,210.48 L982.35,207.23 L981.37,203.98 L980.36,200.73 L979.33,197.48 L978.28,194.23 L977.2,190.98 L976.1,187.73 L974.98,184.48 L973.84,181.23 L972.67,177.98 L971.49,174.73 L970.28,171.49 L969.05,168.24 L967.8,164.99 L966.53,161.74 L965.24,158.49 L963.93,155.24 L962.61,151.99 L961.26,148.74 L959.9,145.49 L958.52,142.24 L957.12,138.99 L955.71,135.74 L954.28,132.49 L952.83,129.24 L951.37,125.99 L949.89,122.74 L948.4,119.49 L946.9,116.24 L945.38,112.99 L943.85,109.74 L942.3,106.49 L940.75,103.24 L939.18,99.99 L937.6,96.74 L936.01,93.49 L934.41,90.24 L932.8,86.99 L931.18,83.74 L929.55,80.49 L927.91,77.24 L926.26,73.99 L924.61,70.75 L922.95,67.5 L921.29,64.25 L919.62,61 L917.94,57.75 L916.26,54.5 L914.57,51.25 L912.88,48 L911.19,44.75 L909.5,41.5 L907.8,38.25 L906.1,35 L904.4,31.75 L902.7,28.5"/>
<path d="M902.1,613.44 L902.95,610.19 L903.8,606.94 L904.65,603.69 L905.5,600.44 L906.35,597.19 L907.2,593.94 L908.04,590.69 L908.88,587.44 L909.73,584.19 L910.56,580.94 L911.4,577.69 L912.23,574.44 L913.07,571.19 L913.89,567.94 L914.72,564.69 L915.54,561.45 L916.35,558.2 L917.16,554.95 L917.97,551.7 L918.77,548.45 L919.57,545.2 L920.36,541.95 L921.15,538.7 L921.93,535.45 L922.7,532.2 L923.47,528.95 L924.23,525.7 L924.99,522.45 L925.74,519.2 L926.48,515.95 L927.21,512.7 L927.94,509.45 L928.65,506.2 L929.36,502.95 L930.07,499.7 L930.76,496.45 L931.44,493.2 L932.12,489.95 L932.79,486.7 L933.44,483.45 L934.09,480.2 L934.73,476.95 L935.36,473.7 L935.97,470.45 L936.58,467.2 L937.18,463.96 L937.77,460.71 L938.34,457.46 L938.91,454.21 L939.46,450.96 L940,447.71 L940.53,444.46 L941.05,441.21 L941.56,437.96 L942.06,434.71 L942.54,431.46 L943.01,428.21 L943.47,424.96 L943.91,421.71 L944.35,418.46 L944.77,415.21 L945.17,411.96 L945.57,408.71 L945.95,405.46 L946.32,402.21 L946.67,398.96 L947.01,395.71 L947.34,392.46 L947.65,389.21 L947.95,385.96 L948.24,382.71 L948.51,379.46 L948.77,376.21 L949.01,372.96 L949.24,369.71 L949.46,366.47 L949.66,363.22 L949.85,359.97 L950.02,356.72 L950.17,353.47 L950.32,350.22 L950.45,346.97 L950.56,343.72 L950.66,340.47 L950.74,337.22 L950.81,333.97 L950.87,330.72 L950.9,327.47 L950.93,324.22 L950.94,320.97 L950.93,317.72 L950.92,314.47 L950.88,311.22 L950.83,307.97 L950.77,304.72 L950.69,301.47 L950.6,298.22 L950.49,294.97 L950.36,291.72 L950.23,288.47 L950.07,285.22 L949.91,281.97 L949.73,278.72 L949.53,275.47 L949.32,272.22 L949.1,268.98 L948.86,265.73 L948.6,262.48 L948.34,259.23 L948.06,255.98 L947.76,252.73 L947.45,249.48 L947.13,246.23 L946.79,242.98 L946.44,239.73 L946.08,236.48 L945.7,233.23 L945.31,229.98 L944.91,226.73 L944.5,223.48 L944.07,220.23 L943.63,216.98 L943.17,213.73 L942.7,210.48 L942.23,207.23 L941.73,203.98 L941.23,200.73 L940.72,197.48 L940.19,194.23 L939.65,190.98 L939.1,187.73 L938.54,184.48 L937.97,181.23 L937.39,177.98 L936.79,174.73 L936.19,171.49 L935.57,168.24 L934.95,164.99 L934.32,161.74 L933.67,158.49 L933.02,155.24 L932.35,151.99 L931.68,148.74 L931,145.49 L930.31,142.24 L929.61,138.99 L928.9,135.74 L928.19,132.49 L927.47,129.24 L926.73,125.99 L926,122.74 L925.25,119.49 L924.5,116.24 L923.74,112.99 L922.97,109.74 L922.2,106.49 L921.42,103.24 L920.64,99.99 L919.85,96.74 L919.05,93.49 L918.25,90.24 L917.45,86.99 L916.64,83.74 L915.82,80.49 L915,77.24 L914.18,73.99 L913.36,70.75 L912.53,67.5 L911.69,64.25 L910.86,61 L910.02,57.75 L909.18,54.5 L908.34,51.25 L907.49,48 L906.65,44.75 L905.8,41.5 L904.95,38.25 L904.1,35 L903.25,31.75 L902.4,28.5"/>
<path d="M902.1,613.44 L902.1,610.19 L902.1,606.94 L902.1,603.69 L902.1,600.44 L902.1,597.19 L902.1,593.94 L902.1,590.69 L902.1,587.44 L902.1,584.19 L902.1,580.94 L902.1,577.69 L902.1,574.44 L902.1,571.19 L902.1,567.94 L902.1,564.69 L902.1,561.45 L902.1,558.2 L902.1,554.95 L902.1,551.7 L902.1,548.45 L902.1,545.2 L902.1,541.95 L902.1,538.7 L902.1,535.45 L902.1,532.2 L902.1,528.95 L902.1,525.7 L902.1,522.45 L902.1,519.2 L902.1,515.95 L902.1,512.7 L902.1,509.45 L902.1,506.2 L902.1,502.95 L902.1,499.7 L902.1,496.45 L902.1,493.2 L902.1,489.95 L902.1,486.7 L902.1,483.45 L902.1,480.2 L902.1,476.95 L902.1,473.7 L902.1,470.45 L902.1,467.2 L902.1,463.96 L902.1,460.71 L902.1,457.46 L902.1,454.21 L902.1,450.96 L902.1,447.71 L902.1,444.46 L902.1,441.21 L902.1,437.96 L902.1,434.71 L902.1,431.46 L902.1,428.21 L902.1,424.96 L902.1,421.71 L902.1,418.46 L902.1,415.21 L902.1,411.96 L902.1,408.71 L902.1,405.46 L902.1,402.21 L902.1,398.96 L902.1,395.71 L902.1,392.46 L902.1,389.21 L902.1,385.96 L902.1,382.71 L902.1,379.46 L902.1,376.21 L902.1,372.96 L902.1,369.71 L902.1,366.47 L902.1,363.22 L902.1,359.97 L902.1,356.72 L902.1,353.47 L902.1,350.22 L902.1,346.97 L902.1,343.72 L902.1,340.47 L902.1,337.22 L902.1,333.97 L902.1,330.72 L902.1,327.47 L902.1,324.22 L902.1,320.97 L902.1,317.72 L902.1,314.47 L902.1,311.22 L902.1,307.97 L902.1,304.72 L902.1,301.47 L902.1,298.22 L902.1,294.97 L902.1,291.72 L902.1,288.47 L902.1,285.22 L902.1,281.97 L902.1,278.72 L902.1,275.47 L902.1,272.22 L902.1,268.98 L902.1,265.73 L902.1,262.48 L902.1,259.23 L902.1,255.98 L902.1,252.73 L902.1,249.48 L902.1,246.23 L902.1,242.98 L902.1,239.73 L902.1,236.48 L902.1,233.23 L902.1,229.98 L902.1,226.73 L902.1,223.48 L902.1,220.23 L902.1,216.98 L902.1,213.73 L902.1,210.48 L902.1,207.23 L902.1,203.98 L902.1,200.73 L902.1,197.48 L902.1,194.23 L902.1,190.98 L902.1,187.73 L902.1,184.48 L902.1,181.23 L902.1,177.98 L902.1,174.73 L902.1,171.49 L902.1,168.24 L902.1,164.99 L902.1,161.74 L902.1,158.49 L902.1,155.24 L902.1,151.99 L902.1,148.74 L902.1,145.49 L902.1,142.24 L902.1,138.99 L902.1,135.74 L902.1,132.49 L902.1,129.24 L902.1,125.99 L902.1,122.74 L902.1,119.49 L902.1,116.24 L902.1,112.99 L902.1,109.74 L902.1,106.49 L902.1,103.24 L902.1,99.99 L902.1,96.74 L902.1,93.49 L902.1,90.24 L902.1,86.99 L902.1,83.74 L902.1,80.49 L902.1,77.24 L902.1,73.99 L902.1,70.75 L902.1,67.5 L902.1,64.25 L902.1,61 L902.1,57.75 L902.1,54.5 L902.1,51.25 L902.1,48 L902.1,44.75 L902.1,41.5 L902.1,38.25 L902.1,35 L902.1,31.75 L902.1,28.5"/>
<path d="M902.1,613.44 L901.25,610.19 L900.4,606.94 L899.55,603.69 L898.7,600.44 L897.85,597.19 L897,593.94 L896.16,590.69 L895.32,587.44 L894.47,584.19 L893.64,580.94 L892.8,577.69 L891.97,574.44 L891.13,571.19 L890.31,567.94 L889.48,564.69 L888.66,561.45 L887.85,558.2 L887.04,554.95 L886.23,551.7 L885.43,548.45 L884.63,545.2 L883.84,541.95 L883.05,538.7 L882.27,535.45 L881.5,532.2 L880.73,528.95 L879.97,525.7 L879.21,522.45 L878.46,519.2 L877.72,515.95 L876.99,512.7 L876.26,509.45 L875.55,506.2 L874.84,502.95 L874.13,499.7 L873.44,496.45 L872.76,493.2 L872.08,489.95 L871.41,486.7 L870.76,483.45 L870.11,480.2 L869.47,476.95 L868.84,473.7 L868.23,470.45 L867.62,467.2 L867.02,463.96 L866.43,460.71 L865.86,457.46 L865.29,454.21 L864.74,450.96 L864.2,447.71 L863.67,444.46 L863.15,441.21 L862.64,437.96 L862.14,434.71 L861.66,431.46 L861.19,428.21 L860.73,424.96 L860.29,421.71 L859.85,418.46 L859.43,415.21 L859.03,411.96 L858.63,408.71 L858.25,405.46 L857.88,402.21 L857.53,398.96 L857.19,395.71 L856.86,392.46 L856.55,389.21 L856.25,385.96 L855.96,382.71 L855.69,379.46 L855.43,376.21 L855.19,372.96 L854.96,369.71 L854.74,366.47 L854.54,363.22 L854.35,359.97 L854.18,356.72 L854.03,353.47 L853.88,350.22 L853.75,346.97 L853.64,343.72 L853.54,340.47 L853.46,337.22 L853.39,333.97 L853.33,330.72 L853.3,327.47 L853.27,324.22 L853.26,320.97 L853.27,317.72 L853.28,314.47 L853.32,311.22 L853.37,307.97 L853.43,304.72 L853.51,301.47 L853.6,298.22 L853.71,294.97 L853.84,291.72 L853.97,288.47 L854.13,285.22 L854.29,281.97 L854.47,278.72 L854.67,275.47 L854.88,272.22 L855.1,268.98 L855.34,265.73 L855.6,262.48 L855.86,259.23 L856.14,255.98 L856.44,252.73 L856.75,249.48 L857.07,246.23 L857.41,242.98 L857.76,239.73 L858.12,236.48 L858.5,233.23 L858.89,229.98 L859.29,226.73 L859.7,223.48 L860.13,220.23 L860.57,216.98 L861.03,213.73 L861.5,210.48 L861.97,207.23 L862.47,203.98 L862.97,200.73 L863.48,197.48 L864.01,194.23 L864.55,190.98 L865.1,187.73 L865.66,184.48 L866.23,181.23 L866.81,177.98 L867.41,174.73 L868.01,171.49 L868.63,168.24 L869.25,164.99 L869.88,161.74 L870.53,158.49 L871.18,155.24 L871.85,151.99 L872.52,148.74 L873.2,145.49 L873.89,142.24 L874.59,138.99 L875.3,135.74 L876.01,132.49 L876.73,129.24 L877.47,125.99 L878.2,122.74 L878.95,119.49 L879.7,116.24 L880.46,112.99 L881.23,109.74 L882,106.49 L882.78,103.24 L883.56,99.99 L884.35,96.74 L885.15,93.49 L885.95,90.24 L886.75,86.99 L887.56,83.74 L888.38,80.49 L889.2,77.24 L890.02,73.99 L890.84,70.75 L891.67,67.5 L892.51,64.25 L893.34,61 L894.18,57.75 L895.02,54.5 L895.86,51.25 L896.71,48 L897.55,44.75 L898.4,41.5 L899.25,38.25 L900.1,35 L900.95,31.75 L901.8,28.5"/>
<path d="M902.1,613.44 L900.4,610.19 L898.7,606.94 L897,603.69 L895.3,600.44 L893.6,597.19 L891.91,593.94 L890.22,590.69 L888.53,587.44 L886.85,584.19 L885.17,580.94 L883.5,577.69 L881.83,574.44 L880.17,571.19 L878.51,567.94 L876.87,564.69 L875.23,561.45 L873.6,558.2 L871.97,554.95 L870.36,551.7 L868.75,548.45 L867.16,545.2 L865.58,541.95 L864,538.7 L862.44,535.45 L860.89,532.2 L859.36,528.95 L857.83,525.7 L856.32,522.45 L854.83,519.2 L853.35,515.95 L851.88,512.7 L850.43,509.45 L848.99,506.2 L847.57,502.95 L846.17,499.7 L844.78,496.45 L843.41,493.2 L842.06,489.95 L840.73,486.7 L839.41,483.45 L838.12,480.2 L836.84,476.95 L835.59,473.7 L834.35,470.45 L833.14,467.2 L831.94,463.96 L830.77,460.71 L829.62,457.46 L828.49,454.21 L827.38,450.96 L826.29,447.71 L825.23,444.46 L824.2,441.21 L823.18,437.96 L822.19,434.71 L821.22,431.46 L820.28,428.21 L819.36,424.96 L818.47,421.71 L817.61,418.46 L816.77,415.21 L815.95,411.96 L815.16,408.71 L814.4,405.46 L813.66,402.21 L812.95,398.96 L812.27,395.71 L811.62,392.46 L810.99,389.21 L810.39,385.96 L809.82,382.71 L809.27,379.46 L808.76,376.21 L808.27,372.96 L807.81,369.71 L807.38,366.47 L806.98,363.22 L806.61,359.97 L806.26,356.72 L805.95,353.47 L805.66,350.22 L805.41,346.97 L805.18,343.72 L804.98,340.47 L804.82,337.22 L804.68,333.97 L804.57,330.72 L804.49,327.47 L804.44,324.22 L804.42,320.97 L804.43,317.72 L804.47,314.47 L804.54,311.22 L804.64,307.97 L804.76,304.72 L804.92,301.47 L805.11,298.22 L805.33,294.97 L805.57,291.72 L805.85,288.47 L806.15,285.22 L806.48,281.97 L806.85,278.72 L807.24,275.47 L807.66,272.22 L808.11,268.98 L808.59,265.73 L809.09,262.48 L809.62,259.23 L810.19,255.98 L810.78,252.73 L811.39,249.48 L812.04,246.23 L812.71,242.98 L813.41,239.73 L814.14,236.48 L814.89,233.23 L815.67,229.98 L816.48,226.73 L817.31,223.48 L818.17,220.23 L819.05,216.98 L819.96,213.73 L820.89,210.48 L821.85,207.23 L822.83,203.98 L823.84,200.73 L824.87,197.48 L825.92,194.23 L827,190.98 L828.1,187.73 L829.22,184.48 L830.36,181.23 L831.53,177.98 L832.71,174.73 L833.92,171.49 L835.15,168.24 L836.4,164.99 L837.67,161.74 L838.96,158.49 L840.27,155.24 L841.59,151.99 L842.94,148.74 L844.3,145.49 L845.68,142.24 L847.08,138.99 L848.49,135.74 L849.92,132.49 L851.37,129.24 L852.83,125.99 L854.31,122.74 L855.8,119.49 L857.3,116.24 L858.82,112.99 L860.35,109.74 L861.9,106.49 L863.45,103.24 L865.02,99.99 L866.6,96.74 L868.19,93.49 L869.79,90.24 L871.4,86.99 L873.02,83.74 L874.65,80.49 L876.29,77.24 L877.94,73.99 L879.59,70.75 L881.25,67.5 L882.91,64.25 L884.58,61 L886.26,57.75 L887.94,54.5 L889.63,51.25 L891.32,48 L893.01,44.75 L894.7,41.5 L896.4,38.25 L898.1,35 L899.8,31.75 L901.5,28.5"/>
<path d="M902.1,613.44 L899.55,610.19 L897,606.94 L894.45,603.69 L891.9,600.44 L889.35,597.19 L886.81,593.94 L884.28,590.69 L881.75,587.44 L879.22,584.19 L876.71,580.94 L874.2,577.69 L871.7,574.44 L869.2,571.19 L866.72,567.94 L864.25,564.69 L861.79,561.45 L859.34,558.2 L856.91,554.95 L854.49,551.7 L852.08,548.45 L849.69,545.2 L847.31,541.95 L844.96,538.7 L842.61,535.45 L840.29,532.2 L837.99,528.95 L835.7,525.7 L833.44,522.45 L831.19,519.2 L828.97,515.95 L826.77,512.7 L824.59,509.45 L822.44,506.2 L820.31,502.95 L818.2,499.7 L816.12,496.45 L814.07,493.2 L812.04,489.95 L810.04,486.7 L808.07,483.45 L806.13,480.2 L804.21,476.95 L802.33,473.7 L800.48,470.45 L798.65,467.2 L796.86,463.96 L795.1,460.71 L793.37,457.46 L791.68,454.21 L790.02,450.96 L788.39,447.71 L786.8,444.46 L785.24,441.21 L783.72,437.96 L782.23,434.71 L780.79,431.46 L779.37,428.21 L778,424.96 L776.66,421.71 L775.36,418.46 L774.1,415.21 L772.88,411.96 L771.69,408.71 L770.55,405.46 L769.44,402.21 L768.38,398.96 L767.36,395.71 L766.38,392.46 L765.44,389.21 L764.54,385.96 L763.68,382.71 L762.86,379.46 L762.09,376.21 L761.36,372.96 L760.67,369.71 L760.02,366.47 L759.42,363.22 L758.86,359.97 L758.35,356.72 L757.88,353.47 L757.45,350.22 L757.06,346.97 L756.72,343.72 L756.43,340.47 L756.17,337.22 L755.97,333.97 L755.8,330.72 L755.69,327.47 L755.61,324.22 L755.58,320.97 L755.6,317.72 L755.65,314.47 L755.76,311.22 L755.91,307.97 L756.1,304.72 L756.33,301.47 L756.61,298.22 L756.94,294.97 L757.31,291.72 L757.72,288.47 L758.18,285.22 L758.68,281.97 L759.22,278.72 L759.81,275.47 L760.44,272.22 L761.11,268.98 L761.83,265.73 L762.59,262.48 L763.39,259.23 L764.23,255.98 L765.11,252.73 L766.04,249.48 L767.01,246.23 L768.02,242.98 L769.07,239.73 L770.16,236.48 L771.29,233.23 L772.46,229.98 L773.66,226.73 L774.91,223.48 L776.2,220.23 L777.52,216.98 L778.89,213.73 L780.29,210.48 L781.72,207.23 L783.2,203.98 L784.7,200.73 L786.25,197.48 L787.83,194.23 L789.44,190.98 L791.09,187.73 L792.78,184.48 L794.49,181.23 L796.24,177.98 L798.02,174.73 L799.83,171.49 L801.68,168.24 L803.55,164.99 L805.45,161.74 L807.39,158.49 L809.35,155.24 L811.34,151.99 L813.36,148.74 L815.4,145.49 L817.47,142.24 L819.57,138.99 L821.69,135.74 L823.83,132.49 L826,129.24 L828.2,125.99 L830.41,122.74 L832.65,119.49 L834.9,116.24 L837.18,112.99 L839.48,109.74 L841.8,106.49 L844.13,103.24 L846.48,99.99 L848.85,96.74 L851.24,93.49 L853.64,90.24 L856.06,86.99 L858.49,83.74 L860.93,80.49 L863.39,77.24 L865.85,73.99 L868.33,70.75 L870.82,67.5 L873.32,64.25 L875.83,61 L878.34,57.75 L880.86,54.5 L883.39,51.25 L885.92,48 L888.46,44.75 L891.01,41.5 L893.55,38.25 L896.1,35 L898.65,31.75 L901.2,28.5"/>
<path d="M902.1,613.44 L898.7,610.19 L895.3,606.94 L891.9,603.69 L888.5,600.44 L885.11,597.19 L881.72,593.94 L878.34,590.69 L874.96,587.44 L871.6,584.19 L868.24,580.94 L864.9,577.69 L861.56,574.44 L858.24,571.19 L854.93,567.94 L851.63,564.69 L848.35,561.45 L845.09,558.2 L841.84,554.95 L838.62,551.7 L835.41,548.45 L832.22,545.2 L829.05,541.95 L825.91,538.7 L822.79,535.45 L819.69,532.2 L816.61,528.95 L813.57,525.7 L810.55,522.45 L807.56,519.2 L804.59,515.95 L801.66,512.7 L798.75,509.45 L795.88,506.2 L793.04,502.95 L790.24,499.7 L787.46,496.45 L784.73,493.2 L782.02,489.95 L779.36,486.7 L776.73,483.45 L774.14,480.2 L771.59,476.95 L769.07,473.7 L766.6,470.45 L764.17,467.2 L761.78,463.96 L759.44,460.71 L757.13,457.46 L754.87,454.21 L752.66,450.96 L750.49,447.71 L748.37,444.46 L746.29,441.21 L744.26,437.96 L742.28,434.71 L740.35,431.46 L738.46,428.21 L736.63,424.96 L734.85,421.71 L733.11,418.46 L731.43,415.21 L729.8,411.96 L728.22,408.71 L726.7,405.46 L725.23,402.21 L723.81,398.96 L722.44,395.71 L721.13,392.46 L719.88,389.21 L718.68,385.96 L717.54,382.71 L716.45,379.46 L715.42,376.21 L714.44,372.96 L713.53,369.71 L712.67,366.47 L711.86,363.22 L711.12,359.97 L710.43,356.72 L709.8,353.47 L709.23,350.22 L708.72,346.97 L708.26,343.72 L707.87,340.47 L707.53,337.22 L707.26,333.97 L707.04,330.72 L706.88,327.47 L706.78,324.22 L706.74,320.97 L706.76,317.72 L706.84,314.47 L706.98,311.22 L707.17,307.97 L707.43,304.72 L707.74,301.47 L708.12,298.22 L708.55,294.97 L709.04,291.72 L709.59,288.47 L710.2,285.22 L710.87,281.97 L711.59,278.72 L712.38,275.47 L713.22,272.22 L714.12,268.98 L715.07,265.73 L716.08,262.48 L717.15,259.23 L718.27,255.98 L719.45,252.73 L720.69,249.48 L721.98,246.23 L723.32,242.98 L724.72,239.73 L726.18,236.48 L727.68,233.23 L729.24,229.98 L730.85,226.73 L732.52,223.48 L734.23,220.23 L736,216.98 L737.81,213.73 L739.68,210.48 L741.6,207.23 L743.56,203.98 L745.57,200.73 L747.63,197.48 L749.74,194.23 L751.89,190.98 L754.09,187.73 L756.34,184.48 L758.62,181.23 L760.95,177.98 L763.33,174.73 L765.74,171.49 L768.2,168.24 L770.7,164.99 L773.24,161.74 L775.82,158.49 L778.43,155.24 L781.08,151.99 L783.77,148.74 L786.5,145.49 L789.26,142.24 L792.05,138.99 L794.88,135.74 L797.74,132.49 L800.64,129.24 L803.56,125.99 L806.51,122.74 L809.5,119.49 L812.51,116.24 L815.54,112.99 L818.61,109.74 L821.7,106.49 L824.81,103.24 L827.95,99.99 L831.11,96.74 L834.29,93.49 L837.49,90.24 L840.71,86.99 L843.95,83.74 L847.21,80.49 L850.48,77.24 L853.77,73.99 L857.08,70.75 L860.39,67.5 L863.72,64.25 L867.07,61 L870.42,57.75 L873.78,54.5 L877.15,51.25 L880.53,48 L883.92,44.75 L887.31,41.5 L890.7,38.25 L894.1,35 L897.5,31.75 L900.91,28.5"/>
<path d="M902.1,613.44 L897.85,610.19 L893.59,606.94 L889.34,603.69 L885.1,600.44 L880.86,597.19 L876.62,593.94 L872.4,590.69 L868.18,587.44 L863.97,584.19 L859.78,580.94 L855.59,577.69 L851.43,574.44 L847.27,571.19 L843.14,567.94 L839.02,564.69 L834.92,561.45 L830.84,558.2 L826.78,554.95 L822.75,551.7 L818.73,548.45 L814.75,545.2 L810.79,541.95 L806.86,538.7 L802.96,535.45 L799.08,532.2 L795.24,528.95 L791.43,525.7 L787.66,522.45 L783.92,519.2 L780.22,515.95 L776.55,512.7 L772.92,509.45 L769.33,506.2 L765.78,502.95 L762.27,499.7 L758.8,496.45 L755.38,493.2 L752,489.95 L748.67,486.7 L745.39,483.45 L742.15,480.2 L738.96,476.95 L735.82,473.7 L732.73,470.45 L729.69,467.2 L726.7,463.96 L723.77,460.71 L720.89,457.46 L718.07,454.21 L715.3,450.96 L712.59,447.71 L709.93,444.46 L707.34,441.21 L704.8,437.96 L702.32,434.71 L699.91,431.46 L697.55,428.21 L695.26,424.96 L693.03,421.71 L690.87,418.46 L688.76,415.21 L686.73,411.96 L684.75,408.71 L682.85,405.46 L681.01,402.21 L679.24,398.96 L677.53,395.71 L675.89,392.46 L674.33,389.21 L672.83,385.96 L671.4,382.71 L670.04,379.46 L668.75,376.21 L667.53,372.96 L666.38,369.71 L665.31,366.47 L664.3,363.22 L663.37,359.97 L662.51,356.72 L661.73,353.47 L661.01,350.22 L660.37,346.97 L659.81,343.72 L659.31,340.47 L658.89,337.22 L658.55,333.97 L658.27,330.72 L658.08,327.47 L657.95,324.22 L657.9,320.97 L657.93,317.72 L658.02,314.47 L658.2,311.22 L658.44,307.97 L658.76,304.72 L659.16,301.47 L659.62,298.22 L660.16,294.97 L660.78,291.72 L661.47,288.47 L662.23,285.22 L663.06,281.97 L663.97,278.72 L664.95,275.47 L666,272.22 L667.12,268.98 L668.31,265.73 L669.58,262.48 L670.91,259.23 L672.32,255.98 L673.79,252.73 L675.34,249.48 L676.95,246.23 L678.63,242.98 L680.38,239.73 L682.19,236.48 L684.08,233.23 L686.03,229.98 L688.04,226.73 L690.12,223.48 L692.27,220.23 L694.47,216.98 L696.74,213.73 L699.08,210.48 L701.47,207.23 L703.93,203.98 L706.44,200.73 L709.02,197.48 L711.65,194.23 L714.34,190.98 L717.09,187.73 L719.89,184.48 L722.75,181.23 L725.67,177.98 L728.64,174.73 L731.66,171.49 L734.73,168.24 L737.85,164.99 L741.02,161.74 L744.24,158.49 L747.51,155.24 L750.83,151.99 L754.19,148.74 L757.6,145.49 L761.05,142.24 L764.54,138.99 L768.08,135.74 L771.66,132.49 L775.27,129.24 L778.93,125.99 L782.62,122.74 L786.34,119.49 L790.11,116.24 L793.9,112.99 L797.73,109.74 L801.6,106.49 L805.49,103.24 L809.41,99.99 L813.36,96.74 L817.33,93.49 L821.34,90.24 L825.36,86.99 L829.41,83.74 L833.48,80.49 L837.58,77.24 L841.69,73.99 L845.82,70.75 L849.97,67.5 L854.13,64.25 L858.31,61 L862.5,57.75 L866.7,54.5 L870.92,51.25 L875.14,48 L879.37,44.75 L883.61,41.5 L887.85,38.25 L892.1,35 L896.35,31.75 L900.61,28.5"/>
<path d="M902.1,613.44 L897,610.19 L891.89,606.94 L886.79,603.69 L881.7,600.44 L876.61,597.19 L871.53,593.94 L866.46,590.69 L861.4,587.44 L856.35,584.19 L851.31,580.94 L846.29,577.69 L841.29,574.44 L836.31,571.19 L831.34,567.94 L826.4,564.69 L821.48,561.45 L816.59,558.2 L811.72,554.95 L806.87,551.7 L802.06,548.45 L797.28,545.2 L792.53,541.95 L787.81,538.7 L783.13,535.45 L778.48,532.2 L773.87,528.95 L769.3,525.7 L764.77,522.45 L760.28,519.2 L755.84,515.95 L751.44,512.7 L747.08,509.45 L742.77,506.2 L738.51,502.95 L734.3,499.7 L730.15,496.45 L726.04,493.2 L721.98,489.95 L717.99,486.7 L714.04,483.45 L710.16,480.2 L706.33,476.95 L702.56,473.7 L698.85,470.45 L695.21,467.2 L691.62,463.96 L688.1,460.71 L684.65,457.46 L681.26,454.21 L677.94,450.96 L674.68,447.71 L671.5,444.46 L668.39,441.21 L665.34,437.96 L662.37,434.71 L659.47,431.46 L656.65,428.21 L653.89,424.96 L651.22,421.71 L648.62,418.46 L646.1,415.21 L643.65,411.96 L641.28,408.71 L639,405.46 L636.79,402.21 L634.66,398.96 L632.62,395.71 L630.65,392.46 L628.77,389.21 L626.97,385.96 L625.26,382.71 L623.62,379.46 L622.08,376.21 L620.62,372.96 L619.24,369.71 L617.95,366.47 L616.74,363.22 L615.63,359.97 L614.59,356.72 L613.65,353.47 L612.79,350.22 L612.03,346.97 L611.35,343.72 L610.75,340.47 L610.25,337.22 L609.83,333.97 L609.51,330.72 L609.27,327.47 L609.12,324.22 L609.06,320.97 L609.09,317.72 L609.21,314.47 L609.41,311.22 L609.71,307.97 L610.09,304.72 L610.57,301.47 L611.13,298.22 L611.78,294.97 L612.52,291.72 L613.34,288.47 L614.25,285.22 L615.25,281.97 L616.34,278.72 L617.52,275.47 L618.78,272.22 L620.12,268.98 L621.56,265.73 L623.07,262.48 L624.67,259.23 L626.36,255.98 L628.13,252.73 L629.98,249.48 L631.92,246.23 L633.94,242.98 L636.03,239.73 L638.21,236.48 L640.47,233.23 L642.81,229.98 L645.23,226.73 L647.73,223.48 L650.3,220.23 L652.95,216.98 L655.67,213.73 L658.47,210.48 L661.34,207.23 L664.29,203.98 L667.31,200.73 L670.4,197.48 L673.56,194.23 L676.79,190.98 L680.09,187.73 L683.45,184.48 L686.88,181.23 L690.38,177.98 L693.94,174.73 L697.57,171.49 L701.25,168.24 L705,164.99 L708.81,161.74 L712.67,158.49 L716.6,155.24 L720.58,151.99 L724.61,148.74 L728.7,145.49 L732.84,142.24 L737.03,138.99 L741.27,135.74 L745.57,132.49 L749.91,129.24 L754.29,125.99 L758.72,122.74 L763.19,119.49 L767.71,116.24 L772.26,112.99 L776.86,109.74 L781.49,106.49 L786.16,103.24 L790.87,99.99 L795.61,96.74 L800.38,93.49 L805.18,90.24 L810.01,86.99 L814.87,83.74 L819.76,80.49 L824.67,77.24 L829.61,73.99 L834.56,70.75 L839.54,67.5 L844.54,64.25 L849.55,61 L854.58,57.75 L859.62,54.5 L864.68,51.25 L869.75,48 L874.83,44.75 L879.91,41.5 L885.01,38.25 L890.1,35 L895.21,31.75 L900.31,28.5"/>
<path d="M902.1,613.44 L896.14,610.19 L890.19,606.94 L884.24,603.69 L878.3,600.44 L872.36,597.19 L866.43,593.94 L860.52,590.69 L854.61,587.44 L848.72,584.19 L842.85,580.94 L836.99,577.69 L831.16,574.44 L825.34,571.19 L819.55,567.94 L813.78,564.69 L808.04,561.45 L802.33,558.2 L796.65,554.95 L791,551.7 L785.39,548.45 L779.81,545.2 L774.27,541.95 L768.76,538.7 L763.3,535.45 L757.88,532.2 L752.5,528.95 L747.17,525.7 L741.88,522.45 L736.65,519.2 L731.46,515.95 L726.33,512.7 L721.25,509.45 L716.22,506.2 L711.25,502.95 L706.34,499.7 L701.49,496.45 L696.69,493.2 L691.97,489.95 L687.3,486.7 L682.7,483.45 L678.17,480.2 L673.7,476.95 L669.3,473.7 L664.98,470.45 L660.72,467.2 L656.54,463.96 L652.44,460.71 L648.41,457.46 L644.45,454.21 L640.58,450.96 L636.78,447.71 L633.07,444.46 L629.43,441.21 L625.88,437.96 L622.41,434.71 L619.03,431.46 L615.74,428.21 L612.53,424.96 L609.4,421.71 L606.37,418.46 L603.43,415.21 L600.58,411.96 L597.82,408.71 L595.15,405.46 L592.57,402.21 L590.09,398.96 L587.7,395.71 L585.41,392.46 L583.22,389.21 L581.12,385.96 L579.12,382.71 L577.21,379.46 L575.41,376.21 L573.7,372.96 L572.1,369.71 L570.59,366.47 L569.18,363.22 L567.88,359.97 L566.68,356.72 L565.58,353.47 L564.58,350.22 L563.68,346.97 L562.89,343.72 L562.2,340.47 L561.61,337.22 L561.12,333.97 L560.74,330.72 L560.47,327.47 L560.29,324.22 L560.22,320.97 L560.26,317.72 L560.39,314.47 L560.63,311.22 L560.98,307.97 L561.43,304.72 L561.98,301.47 L562.63,298.22 L563.39,294.97 L564.25,291.72 L565.21,288.47 L566.28,285.22 L567.45,281.97 L568.72,278.72 L570.09,275.47 L571.56,272.22 L573.13,268.98 L574.8,265.73 L576.57,262.48 L578.44,259.23 L580.4,255.98 L582.47,252.73 L584.63,249.48 L586.89,246.23 L589.24,242.98 L591.69,239.73 L594.23,236.48 L596.87,233.23 L599.6,229.98 L602.42,226.73 L605.33,223.48 L608.33,220.23 L611.42,216.98 L614.6,213.73 L617.87,210.48 L621.22,207.23 L624.66,203.98 L628.18,200.73 L631.78,197.48 L635.47,194.23 L639.24,190.98 L643.09,187.73 L647.01,184.48 L651.01,181.23 L655.09,177.98 L659.25,174.73 L663.48,171.49 L667.78,168.24 L672.15,164.99 L676.59,161.74 L681.1,158.49 L685.68,155.24 L690.32,151.99 L695.03,148.74 L699.8,145.49 L704.63,142.24 L709.52,138.99 L714.47,135.74 L719.48,132.49 L724.54,129.24 L729.66,125.99 L734.82,122.74 L740.04,119.49 L745.31,116.24 L750.63,112.99 L755.99,109.74 L761.39,106.49 L766.84,103.24 L772.33,99.99 L777.86,96.74 L783.43,93.49 L789.03,90.24 L794.67,86.99 L800.34,83.74 L806.04,80.49 L811.77,77.24 L817.52,73.99 L823.31,70.75 L829.11,67.5 L834.94,64.25 L840.79,61 L846.66,57.75 L852.54,54.5 L858.44,51.25 L864.36,48 L870.28,44.75 L876.22,41.5 L882.16,38.25 L888.1,35 L894.06,31.75 L900.01,28.5"/>
<path d="M902.1,613.44 L895.29,610.19 L888.49,606.94 L881.69,603.69 L874.9,600.44 L868.11,597.19 L861.34,593.94 L854.58,590.69 L847.83,587.44 L841.1,584.19 L834.38,580.94 L827.69,577.69 L821.02,574.44 L814.38,571.19 L807.76,567.94 L801.17,564.69 L794.61,561.45 L788.08,558.2 L781.59,554.95 L775.13,551.7 L768.72,548.45 L762.34,545.2 L756,541.95 L749.71,538.7 L743.47,535.45 L737.28,532.2 L731.13,528.95 L725.04,525.7 L719,522.45 L713.01,519.2 L707.08,515.95 L701.22,512.7 L695.41,509.45 L689.67,506.2 L683.99,502.95 L678.37,499.7 L672.83,496.45 L667.35,493.2 L661.95,489.95 L656.61,486.7 L651.36,483.45 L646.18,480.2 L641.07,476.95 L636.05,473.7 L631.1,470.45 L626.24,467.2 L621.46,463.96 L616.77,460.71 L612.16,457.46 L607.65,454.21 L603.22,450.96 L598.88,447.71 L594.63,444.46 L590.48,441.21 L586.42,437.96 L582.46,434.71 L578.59,431.46 L574.83,428.21 L571.16,424.96 L567.59,421.71 L564.13,418.46 L560.76,415.21 L557.5,411.96 L554.35,408.71 L551.3,405.46 L548.35,402.21 L545.52,398.96 L542.79,395.71 L540.17,392.46 L537.66,389.21 L535.26,385.96 L532.97,382.71 L530.8,379.46 L528.74,376.21 L526.79,372.96 L524.95,369.71 L523.23,366.47 L521.63,363.22 L520.13,359.97 L518.76,356.72 L517.5,353.47 L516.36,350.22 L515.34,346.97 L514.43,343.72 L513.64,340.47 L512.97,337.22 L512.41,333.97 L511.98,330.72 L511.66,327.47 L511.46,324.22 L511.38,320.97 L511.42,317.72 L511.58,314.47 L511.85,311.22 L512.25,307.97 L512.76,304.72 L513.39,301.47 L514.14,298.22 L515,294.97 L515.99,291.72 L517.09,288.47 L518.31,285.22 L519.64,281.97 L521.09,278.72 L522.65,275.47 L524.34,272.22 L526.13,268.98 L528.04,265.73 L530.06,262.48 L532.2,259.23 L534.45,255.98 L536.81,252.73 L539.28,249.48 L541.86,246.23 L544.55,242.98 L547.35,239.73 L550.25,236.48 L553.26,233.23 L556.38,229.98 L559.61,226.73 L562.93,223.48 L566.36,220.23 L569.9,216.98 L573.53,213.73 L577.26,210.48 L581.09,207.23 L585.02,203.98 L589.05,200.73 L593.17,197.48 L597.38,194.23 L601.69,190.98 L606.08,187.73 L610.57,184.48 L615.15,181.23 L619.81,177.98 L624.56,174.73 L629.39,171.49 L634.3,168.24 L639.3,164.99 L644.38,161.74 L649.53,158.49 L654.76,155.24 L660.07,151.99 L665.45,148.74 L670.9,145.49 L676.42,142.24 L682.01,138.99 L687.67,135.74 L693.39,132.49 L699.17,129.24 L705.02,125.99 L710.93,122.74 L716.89,119.49 L722.91,116.24 L728.99,112.99 L735.11,109.74 L741.29,106.49 L747.52,103.24 L753.79,99.99 L760.11,96.74 L766.47,93.49 L772.88,90.24 L779.32,86.99 L785.8,83.74 L792.31,80.49 L798.86,77.24 L805.44,73.99 L812.05,70.75 L818.69,67.5 L825.35,64.25 L832.03,61 L838.74,57.75 L845.46,54.5 L852.21,51.25 L858.96,48 L865.74,44.75 L872.52,41.5 L879.31,38.25 L886.11,35 L892.91,31.75 L899.71,28.5"/>
<path d="M902.1,613.44 L894.44,610.19 L886.79,606.94 L879.14,603.69 L871.5,600.44 L863.86,597.19 L856.24,593.94 L848.63,590.69 L841.04,587.44 L833.47,584.19 L825.92,580.94 L818.39,577.69 L810.89,574.44 L803.41,571.19 L795.96,567.94 L788.55,564.69 L781.17,561.45 L773.83,558.2 L766.52,554.95 L759.26,551.7 L752.04,548.45 L744.87,545.2 L737.74,541.95 L730.67,538.7 L723.64,535.45 L716.67,532.2 L709.76,528.95 L702.9,525.7 L696.11,522.45 L689.38,519.2 L682.71,515.95 L676.11,512.7 L669.57,509.45 L663.11,506.2 L656.72,502.95 L650.41,499.7 L644.17,496.45 L638.01,493.2 L631.93,489.95 L625.93,486.7 L620.01,483.45 L614.18,480.2 L608.44,476.95 L602.79,473.7 L597.23,470.45 L591.76,467.2 L586.38,463.96 L581.1,460.71 L575.92,457.46 L570.84,454.21 L565.86,450.96 L560.98,447.71 L556.2,444.46 L551.53,441.21 L546.96,437.96 L542.5,434.71 L538.16,431.46 L533.92,428.21 L529.79,424.96 L525.78,421.71 L521.88,418.46 L518.09,415.21 L514.43,411.96 L510.88,408.71 L507.45,405.46 L504.13,402.21 L500.94,398.96 L497.87,395.71 L494.93,392.46 L492.11,389.21 L489.41,385.96 L486.83,382.71 L484.39,379.46 L482.07,376.21 L479.87,372.96 L477.81,369.71 L475.87,366.47 L474.07,363.22 L472.39,359.97 L470.84,356.72 L469.43,353.47 L468.14,350.22 L466.99,346.97 L465.97,343.72 L465.08,340.47 L464.32,337.22 L463.7,333.97 L463.21,330.72 L462.86,327.47 L462.63,324.22 L462.54,320.97 L462.59,317.72 L462.76,314.47 L463.07,311.22 L463.52,307.97 L464.09,304.72 L464.8,301.47 L465.64,298.22 L466.62,294.97 L467.72,291.72 L468.96,288.47 L470.33,285.22 L471.83,281.97 L473.46,278.72 L475.22,275.47 L477.11,272.22 L479.13,268.98 L481.28,265.73 L483.56,262.48 L485.96,259.23 L488.49,255.98 L491.14,252.73 L493.92,249.48 L496.83,246.23 L499.85,242.98 L503,239.73 L506.27,236.48 L509.66,233.23 L513.17,229.98 L516.79,226.73 L520.54,223.48 L524.4,220.23 L528.37,216.98 L532.46,213.73 L536.66,210.48 L540.97,207.23 L545.39,203.98 L549.91,200.73 L554.55,197.48 L559.29,194.23 L564.13,190.98 L569.08,187.73 L574.13,184.48 L579.28,181.23 L584.52,177.98 L589.86,174.73 L595.3,171.49 L600.83,168.24 L606.45,164.99 L612.16,161.74 L617.96,158.49 L623.84,155.24 L629.81,151.99 L635.87,148.74 L642,145.49 L648.21,142.24 L654.5,138.99 L660.86,135.74 L667.3,132.49 L673.81,129.24 L680.39,125.99 L687.03,122.74 L693.74,119.49 L700.51,116.24 L707.35,112.99 L714.24,109.74 L721.19,106.49 L728.2,103.24 L735.25,99.99 L742.36,96.74 L749.52,93.49 L756.72,90.24 L763.97,86.99 L771.26,83.74 L778.59,80.49 L785.96,77.24 L793.36,73.99 L800.79,70.75 L808.26,67.5 L815.75,64.25 L823.28,61 L830.82,57.75 L838.39,54.5 L845.97,51.25 L853.57,48 L861.19,44.75 L868.82,41.5 L876.46,38.25 L884.11,35 L891.76,31.75 L899.41,28.5"/>
<path d="M902.1,613.44 L893.59,610.19 L885.09,606.94 L876.59,603.69 L868.1,600.44 L859.62,597.19 L851.15,593.94 L842.69,590.69 L834.26,587.44 L825.84,584.19 L817.45,580.94 L809.09,577.69 L800.75,574.44 L792.44,571.19 L784.17,567.94 L775.93,564.69 L767.73,561.45 L759.58,558.2 L751.46,554.95 L743.39,551.7 L735.37,548.45 L727.4,545.2 L719.48,541.95 L711.62,538.7 L703.81,535.45 L696.07,532.2 L688.39,528.95 L680.77,525.7 L673.22,522.45 L665.74,519.2 L658.33,515.95 L651,512.7 L643.74,509.45 L636.56,506.2 L629.46,502.95 L622.44,499.7 L615.51,496.45 L608.66,493.2 L601.91,489.95 L595.24,486.7 L588.67,483.45 L582.19,480.2 L575.81,476.95 L569.53,473.7 L563.35,470.45 L557.28,467.2 L551.3,463.96 L545.44,460.71 L539.68,457.46 L534.03,454.21 L528.5,450.96 L523.07,447.71 L517.77,444.46 L512.58,441.21 L507.5,437.96 L502.55,434.71 L497.72,431.46 L493.01,428.21 L488.42,424.96 L483.96,421.71 L479.63,418.46 L475.43,415.21 L471.35,411.96 L467.41,408.71 L463.6,405.46 L459.92,402.21 L456.37,398.96 L452.96,395.71 L449.69,392.46 L446.55,389.21 L443.55,385.96 L440.69,382.71 L437.97,379.46 L435.4,376.21 L432.96,372.96 L430.67,369.71 L428.51,366.47 L426.51,363.22 L424.64,359.97 L422.92,356.72 L421.35,353.47 L419.92,350.22 L418.64,346.97 L417.51,343.72 L416.52,340.47 L415.68,337.22 L414.99,333.97 L414.45,330.72 L414.05,327.47 L413.8,324.22 L413.7,320.97 L413.75,317.72 L413.95,314.47 L414.29,311.22 L414.78,307.97 L415.42,304.72 L416.21,301.47 L417.15,298.22 L418.23,294.97 L419.46,291.72 L420.83,288.47 L422.36,285.22 L424.02,281.97 L425.84,278.72 L427.79,275.47 L429.89,272.22 L432.14,268.98 L434.53,265.73 L437.05,262.48 L439.72,259.23 L442.53,255.98 L445.48,252.73 L448.57,249.48 L451.8,246.23 L455.16,242.98 L458.66,239.73 L462.29,236.48 L466.06,233.23 L469.95,229.98 L473.98,226.73 L478.14,223.48 L482.43,220.23 L486.85,216.98 L491.39,213.73 L496.05,210.48 L500.84,207.23 L505.75,203.98 L510.78,200.73 L515.93,197.48 L521.2,194.23 L526.58,190.98 L532.08,187.73 L537.69,184.48 L543.41,181.23 L549.24,177.98 L555.17,174.73 L561.21,171.49 L567.35,168.24 L573.6,164.99 L579.95,161.74 L586.39,158.49 L592.93,155.24 L599.56,151.99 L606.28,148.74 L613.1,145.49 L620,142.24 L626.99,138.99 L634.06,135.74 L641.21,132.49 L648.44,129.24 L655.75,125.99 L663.13,122.74 L670.59,119.49 L678.11,116.24 L685.71,112.99 L693.37,109.74 L701.09,106.49 L708.87,103.24 L716.72,99.99 L724.62,96.74 L732.57,93.49 L740.57,90.24 L748.62,86.99 L756.72,83.74 L764.87,80.49 L773.05,77.24 L781.28,73.99 L789.54,70.75 L797.83,67.5 L806.16,64.25 L814.52,61 L822.9,57.75 L831.31,54.5 L839.73,51.25 L848.18,48 L856.64,44.75 L865.12,41.5 L873.61,38.25 L882.11,35 L890.61,31.75 L899.12,28.5"/>
<path d="M902.1,613.44 L892.74,610.19 L883.39,606.94 L874.04,603.69 L864.7,600.44 L855.37,597.19 L846.05,593.94 L836.75,590.69 L827.48,587.44 L818.22,584.19 L808.99,580.94 L799.79,577.69 L790.62,574.44 L781.48,571.19 L772.38,567.94 L763.32,564.69 L754.3,561.45 L745.32,558.2 L736.4,554.95 L727.52,551.7 L718.7,548.45 L709.93,545.2 L701.22,541.95 L692.57,538.7 L683.98,535.45 L675.47,532.2 L667.02,528.95 L658.64,525.7 L650.33,522.45 L642.1,519.2 L633.95,515.95 L625.89,512.7 L617.9,509.45 L610,506.2 L602.19,502.95 L594.47,499.7 L586.85,496.45 L579.32,493.2 L571.89,489.95 L564.56,486.7 L557.33,483.45 L550.2,480.2 L543.19,476.95 L536.28,473.7 L529.48,470.45 L522.79,467.2 L516.22,463.96 L509.77,460.71 L503.44,457.46 L497.23,454.21 L491.14,450.96 L485.17,447.71 L479.33,444.46 L473.62,441.21 L468.04,437.96 L462.59,434.71 L457.28,431.46 L452.1,428.21 L447.06,424.96 L442.15,421.71 L437.38,418.46 L432.76,415.21 L428.28,411.96 L423.94,408.71 L419.74,405.46 L415.7,402.21 L411.8,398.96 L408.05,395.71 L404.45,392.46 L401,389.21 L397.7,385.96 L394.55,382.71 L391.56,379.46 L388.73,376.21 L386.05,372.96 L383.52,369.71 L381.16,366.47 L378.95,363.22 L376.9,359.97 L375.01,356.72 L373.28,353.47 L371.71,350.22 L370.3,346.97 L369.05,343.72 L367.97,340.47 L367.04,337.22 L366.28,333.97 L365.68,330.72 L365.25,327.47 L364.97,324.22 L364.86,320.97 L364.92,317.72 L365.13,314.47 L365.51,311.22 L366.05,307.97 L366.76,304.72 L367.62,301.47 L368.65,298.22 L369.84,294.97 L371.19,291.72 L372.71,288.47 L374.38,285.22 L376.22,281.97 L378.21,278.72 L380.36,275.47 L382.67,272.22 L385.14,268.98 L387.77,265.73 L390.55,262.48 L393.49,259.23 L396.58,255.98 L399.82,252.73 L403.22,249.48 L406.77,246.23 L410.47,242.98 L414.31,239.73 L418.31,236.48 L422.45,233.23 L426.74,229.98 L431.17,226.73 L435.75,223.48 L440.46,220.23 L445.32,216.98 L450.32,213.73 L455.45,210.48 L460.72,207.23 L466.12,203.98 L471.65,200.73 L477.32,197.48 L483.11,194.23 L489.03,190.98 L495.08,187.73 L501.25,184.48 L507.54,181.23 L513.95,177.98 L520.48,174.73 L527.12,171.49 L533.88,168.24 L540.75,164.99 L547.73,161.74 L554.82,158.49 L562.01,155.24 L569.31,151.99 L576.7,148.74 L584.2,145.49 L591.79,142.24 L599.48,138.99 L607.25,135.74 L615.12,132.49 L623.08,129.24 L631.12,125.99 L639.24,122.74 L647.44,119.49 L655.72,116.24 L664.07,112.99 L672.49,109.74 L680.99,106.49 L689.55,103.24 L698.18,99.99 L706.87,96.74 L715.61,93.49 L724.42,90.24 L733.28,86.99 L742.19,83.74 L751.14,80.49 L760.15,77.24 L769.2,73.99 L778.28,70.75 L787.41,67.5 L796.57,64.25 L805.76,61 L814.98,57.75 L824.23,54.5 L833.5,51.25 L842.79,48 L852.1,44.75 L861.42,41.5 L870.76,38.25 L880.11,35 L889.46,31.75 L898.82,28.5"/>
<path d="M902.1,613.44 L891.89,610.19 L881.69,606.94 L871.49,603.69 L861.3,600.44 L851.12,597.19 L840.96,593.94 L830.81,590.69 L820.69,587.44 L810.59,584.19 L800.52,580.94 L790.49,577.69 L780.48,574.44 L770.51,571.19 L760.58,567.94 L750.7,564.69 L740.86,561.45 L731.07,558.2 L721.33,554.95 L711.65,551.7 L702.02,548.45 L692.46,545.2 L682.96,541.95 L673.52,538.7 L664.16,535.45 L654.86,532.2 L645.64,528.95 L636.5,525.7 L627.44,522.45 L618.47,519.2 L609.58,515.95 L600.78,512.7 L592.06,509.45 L583.45,506.2 L574.93,502.95 L566.51,499.7 L558.19,496.45 L549.98,493.2 L541.87,489.95 L533.87,486.7 L525.98,483.45 L518.21,480.2 L510.56,476.95 L503.02,473.7 L495.6,470.45 L488.31,467.2 L481.15,463.96 L474.11,460.71 L467.2,457.46 L460.42,454.21 L453.78,450.96 L447.27,447.71 L440.9,444.46 L434.67,441.21 L428.58,437.96 L422.64,434.71 L416.84,431.46 L411.19,428.21 L405.69,424.96 L400.34,421.71 L395.14,418.46 L390.09,415.21 L385.2,411.96 L380.47,408.71 L375.89,405.46 L371.48,402.21 L367.22,398.96 L363.13,395.71 L359.2,392.46 L355.44,389.21 L351.84,385.96 L348.41,382.71 L345.15,379.46 L342.06,376.21 L339.13,372.96 L336.38,369.71 L333.8,366.47 L331.39,363.22 L329.15,359.97 L327.09,356.72 L325.2,353.47 L323.49,350.22 L321.95,346.97 L320.59,343.72 L319.41,340.47 L318.4,337.22 L317.57,333.97 L316.92,330.72 L316.44,327.47 L316.14,324.22 L316.02,320.97 L316.08,317.72 L316.32,314.47 L316.73,311.22 L317.32,307.97 L318.09,304.72 L319.03,301.47 L320.16,298.22 L321.46,294.97 L322.93,291.72 L324.58,288.47 L326.41,285.22 L328.41,281.97 L330.58,278.72 L332.93,275.47 L335.45,272.22 L338.15,268.98 L341.01,265.73 L344.04,262.48 L347.25,259.23 L350.62,255.98 L354.16,252.73 L357.87,249.48 L361.74,246.23 L365.77,242.98 L369.97,239.73 L374.33,236.48 L378.85,233.23 L383.52,229.98 L388.36,226.73 L393.35,223.48 L398.5,220.23 L403.79,216.98 L409.24,213.73 L414.84,210.48 L420.59,207.23 L426.48,203.98 L432.52,200.73 L438.7,197.48 L445.02,194.23 L451.48,190.98 L458.07,187.73 L464.81,184.48 L471.67,181.23 L478.66,177.98 L485.78,174.73 L493.03,171.49 L500.41,168.24 L507.9,164.99 L515.51,161.74 L523.25,158.49 L531.09,155.24 L539.05,151.99 L547.12,148.74 L555.3,145.49 L563.58,142.24 L571.96,138.99 L580.45,135.74 L589.03,132.49 L597.71,129.24 L606.48,125.99 L615.34,122.74 L624.29,119.49 L633.32,116.24 L642.43,112.99 L651.62,109.74 L660.89,106.49 L670.23,103.24 L679.64,99.99 L689.12,96.74 L698.66,93.49 L708.27,90.24 L717.93,86.99 L727.65,83.74 L737.42,80.49 L747.24,77.24 L757.11,73.99 L767.03,70.75 L776.98,67.5 L786.97,64.25 L797,61 L807.06,57.75 L817.15,54.5 L827.26,51.25 L837.4,48 L847.55,44.75 L857.73,41.5 L867.91,38.25 L878.11,35 L888.31,31.75 L898.52,28.5"/>
<path d="M750.41,564.6 L754.62,564.6 L758.84,564.6 L763.05,564.6 L767.27,564.6 L771.48,564.6 L775.69,564.6 L779.91,564.6 L784.12,564.6 L788.33,564.6 L792.55,564.6 L796.76,564.6 L800.97,564.6 L805.19,564.6 L809.4,564.6 L813.61,564.6 L817.83,564.6 L822.04,564.6 L826.26,564.6 L830.47,564.6 L834.68,564.6 L838.9,564.6 L843.11,564.6 L847.32,564.6 L851.54,564.6 L855.75,564.6 L859.96,564.6 L864.18,564.6 L868.39,564.6 L872.6,564.6 L876.82,564.6 L881.03,564.6 L885.25,564.6 L889.46,564.6 L893.67,564.6 L897.89,564.6 L902.1,564.6 L906.31,564.6 L910.53,564.6 L914.74,564.6 L918.95,564.6 L923.17,564.6 L927.38,564.6 L931.6,564.6 L935.81,564.6 L940.02,564.6 L944.24,564.6 L948.45,564.6 L952.66,564.6 L956.88,564.6 L961.09,564.6 L965.3,564.6 L969.52,564.6 L973.73,564.6 L977.94,564.6 L982.16,564.6 L986.37,564.6 L990.59,564.6 L994.8,564.6 L999.01,564.6 L1003.23,564.6 L1007.44,564.6 L1011.65,564.6 L1015.87,564.6 L1020.08,564.6 L1024.29,564.6 L1028.51,564.6 L1032.72,564.6 L1036.93,564.6 L1041.15,564.6 L1045.36,564.6 L1049.58,564.6 L1053.79,564.6"/>
<path d="M609.06,515.76 L617.2,515.76 L625.34,515.76 L633.48,515.76 L641.62,515.76 L649.76,515.76 L657.9,515.76 L666.04,515.76 L674.18,515.76 L682.32,515.76 L690.46,515.76 L698.6,515.76 L706.74,515.76 L714.88,515.76 L723.02,515.76 L731.16,515.76 L739.3,515.76 L747.44,515.76 L755.58,515.76 L763.72,515.76 L771.86,515.76 L780,515.76 L788.14,515.76 L796.28,515.76 L804.42,515.76 L812.56,515.76 L820.7,515.76 L828.84,515.76 L836.98,515.76 L845.12,515.76 L853.26,515.76 L861.4,515.76 L869.54,515.76 L877.68,515.76 L885.82,515.76 L893.96,515.76 L902.1,515.76 L910.24,515.76 L918.38,515.76 L926.52,515.76 L934.66,515.76 L942.8,515.76 L950.94,515.76 L959.08,515.76 L967.22,515.76 L975.36,515.76 L983.5,515.76 L991.64,515.76 L999.78,515.76 L1007.92,515.76 L1016.06,515.76 L1024.2,515.76 L1032.34,515.76 L1040.48,515.76 L1048.62,515.76 L1056.76,515.76 L1064.9,515.76 L1073.04,515.76 L1081.18,515.76 L1089.32,515.76 L1097.46,515.76 L1105.6,515.76 L1113.74,515.76 L1121.88,515.76 L1130.02,515.76 L1138.16,515.76 L1146.3,515.76 L1154.44,515.76 L1162.58,515.76 L1170.72,515.76 L1178.86,515.76 L1187,515.76 L1195.14,515.76"/>
<path d="M487.68,466.92 L499.19,466.92 L510.7,466.92 L522.21,466.92 L533.73,466.92 L545.24,466.92 L556.75,466.92 L568.26,466.92 L579.77,466.92 L591.28,466.92 L602.8,466.92 L614.31,466.92 L625.82,466.92 L637.33,466.92 L648.84,466.92 L660.35,466.92 L671.87,466.92 L683.38,466.92 L694.89,466.92 L706.4,466.92 L717.91,466.92 L729.42,466.92 L740.94,466.92 L752.45,466.92 L763.96,466.92 L775.47,466.92 L786.98,466.92 L798.49,466.92 L810.01,466.92 L821.52,466.92 L833.03,466.92 L844.54,466.92 L856.05,466.92 L867.56,466.92 L879.08,466.92 L890.59,466.92 L902.1,466.92 L913.61,466.92 L925.12,466.92 L936.64,466.92 L948.15,466.92 L959.66,466.92 L971.17,466.92 L982.68,466.92 L994.19,466.92 L1005.71,466.92 L1017.22,466.92 L1028.73,466.92 L1040.24,466.92 L1051.75,466.92 L1063.26,466.92 L1074.78,466.92 L1086.29,466.92 L1097.8,466.92 L1109.31,466.92 L1120.82,466.92 L1132.33,466.92 L1143.85,466.92 L1155.36,466.92 L1166.87,466.92 L1178.38,466.92 L1189.89,466.92 L1201.4,466.92 L1212.92,466.92 L1224.43,466.92 L1235.94,466.92 L1247.45,466.92 L1258.96,466.92 L1270.47,466.92 L1281.99,466.92 L1293.5,466.92 L1305.01,466.92 L1316.52,466.92"/>
<path d="M394.54,418.08 L408.64,418.08 L422.74,418.08 L436.84,418.08 L450.94,418.08 L465.03,418.08 L479.13,418.08 L493.23,418.08 L507.33,418.08 L521.43,418.08 L535.53,418.08 L549.63,418.08 L563.73,418.08 L577.83,418.08 L591.92,418.08 L606.02,418.08 L620.12,418.08 L634.22,418.08 L648.32,418.08 L662.42,418.08 L676.52,418.08 L690.62,418.08 L704.72,418.08 L718.81,418.08 L732.91,418.08 L747.01,418.08 L761.11,418.08 L775.21,418.08 L789.31,418.08 L803.41,418.08 L817.51,418.08 L831.61,418.08 L845.7,418.08 L859.8,418.08 L873.9,418.08 L888,418.08 L902.1,418.08 L916.2,418.08 L930.3,418.08 L944.4,418.08 L958.5,418.08 L972.59,418.08 L986.69,418.08 L1000.79,418.08 L1014.89,418.08 L1028.99,418.08 L1043.09,418.08 L1057.19,418.08 L1071.29,418.08 L1085.39,418.08 L1099.48,418.08 L1113.58,418.08 L1127.68,418.08 L1141.78,418.08 L1155.88,418.08 L1169.98,418.08 L1184.08,418.08 L1198.18,418.08 L1212.28,418.08 L1226.37,418.08 L1240.47,418.08 L1254.57,418.08 L1268.67,418.08 L1282.77,418.08 L1296.87,418.08 L1310.97,418.08 L1325.07,418.08 L1339.17,418.08 L1353.26,418.08 L1367.36,418.08 L1381.46,418.08 L1395.56,418.08 L1409.66,418.08"/>
<path d="M335.99,369.24 L351.72,369.24 L367.44,369.24 L383.17,369.24 L398.89,369.24 L414.62,369.24 L430.34,369.24 L446.07,369.24 L461.79,369.24 L477.52,369.24 L493.24,369.24 L508.97,369.24 L524.69,369.24 L540.42,369.24 L556.14,369.24 L571.87,369.24 L587.59,369.24 L603.32,369.24 L619.05,369.24 L634.77,369.24 L650.5,369.24 L666.22,369.24 L681.95,369.24 L697.67,369.24 L713.4,369.24 L729.12,369.24 L744.85,369.24 L760.57,369.24 L776.3,369.24 L792.02,369.24 L807.75,369.24 L823.47,369.24 L839.2,369.24 L854.92,369.24 L870.65,369.24 L886.37,369.24 L902.1,369.24 L917.83,369.24 L933.55,369.24 L949.28,369.24 L965,369.24 L980.73,369.24 L996.45,369.24 L1012.18,369.24 L1027.9,369.24 L1043.63,369.24 L1059.35,369.24 L1075.08,369.24 L1090.8,369.24 L1106.53,369.24 L1122.25,369.24 L1137.98,369.24 L1153.7,369.24 L1169.43,369.24 L1185.15,369.24 L1200.88,369.24 L1216.61,369.24 L1232.33,369.24 L1248.06,369.24 L1263.78,369.24 L1279.51,369.24 L1295.23,369.24 L1310.96,369.24 L1326.68,369.24 L1342.41,369.24 L1358.13,369.24 L1373.86,369.24 L1389.58,369.24 L1405.31,369.24 L1421.03,369.24 L1436.76,369.24 L1452.48,369.24 L1468.21,369.24"/>
<path d="M316.02,320.4 L332.3,320.4 L348.58,320.4 L364.86,320.4 L381.14,320.4 L397.42,320.4 L413.7,320.4 L429.98,320.4 L446.26,320.4 L462.54,320.4 L478.82,320.4 L495.1,320.4 L511.38,320.4 L527.66,320.4 L543.94,320.4 L560.22,320.4 L576.5,320.4 L592.78,320.4 L609.06,320.4 L625.34,320.4 L641.62,320.4 L657.9,320.4 L674.18,320.4 L690.46,320.4 L706.74,320.4 L723.02,320.4 L739.3,320.4 L755.58,320.4 L771.86,320.4 L788.14,320.4 L804.42,320.4 L820.7,320.4 L836.98,320.4 L853.26,320.4 L869.54,320.4 L885.82,320.4 L902.1,320.4 L918.38,320.4 L934.66,320.4 L950.94,320.4 L967.22,320.4 L983.5,320.4 L999.78,320.4 L1016.06,320.4 L1032.34,320.4 L1048.62,320.4 L1064.9,320.4 L1081.18,320.4 L1097.46,320.4 L1113.74,320.4 L1130.02,320.4 L1146.3,320.4 L1162.58,320.4 L1178.86,320.4 L1195.14,320.4 L1211.42,320.4 L1227.7,320.4 L1243.98,320.4 L1260.26,320.4 L1276.54,320.4 L1292.82,320.4 L1309.1,320.4 L1325.38,320.4 L1341.66,320.4 L1357.94,320.4 L1374.22,320.4 L1390.5,320.4 L1406.78,320.4 L1423.06,320.4 L1439.34,320.4 L1455.62,320.4 L1471.9,320.4 L1488.18,320.4"/>
<path d="M335.99,271.56 L351.72,271.56 L367.44,271.56 L383.17,271.56 L398.89,271.56 L414.62,271.56 L430.34,271.56 L446.07,271.56 L461.79,271.56 L477.52,271.56 L493.24,271.56 L508.97,271.56 L524.69,271.56 L540.42,271.56 L556.14,271.56 L571.87,271.56 L587.59,271.56 L603.32,271.56 L619.05,271.56 L634.77,271.56 L650.5,271.56 L666.22,271.56 L681.95,271.56 L697.67,271.56 L713.4,271.56 L729.12,271.56 L744.85,271.56 L760.57,271.56 L776.3,271.56 L792.02,271.56 L807.75,271.56 L823.47,271.56 L839.2,271.56 L854.92,271.56 L870.65,271.56 L886.37,271.56 L902.1,271.56 L917.83,271.56 L933.55,271.56 L949.28,271.56 L965,271.56 L980.73,271.56 L996.45,271.56 L1012.18,271.56 L1027.9,271.56 L1043.63,271.56 L1059.35,271.56 L1075.08,271.56 L1090.8,271.56 L1106.53,271.56 L1122.25,271.56 L1137.98,271.56 L1153.7,271.56 L1169.43,271.56 L1185.15,271.56 L1200.88,271.56 L1216.61,271.56 L1232.33,271.56 L1248.06,271.56 L1263.78,271.56 L1279.51,271.56 L1295.23,271.56 L1310.96,271.56 L1326.68,271.56 L1342.41,271.56 L1358.13,271.56 L1373.86,271.56 L1389.58,271.56 L1405.31,271.56 L1421.03,271.56 L1436.76,271.56 L1452.48,271.56 L1468.21,271.56"/>
<path d="M394.54,222.72 L408.64,222.72 L422.74,222.72 L436.84,222.72 L450.94,222.72 L465.03,222.72 L479.13,222.72 L493.23,222.72 L507.33,222.72 L521.43,222.72 L535.53,222.72 L549.63,222.72 L563.73,222.72 L577.83,222.72 L591.92,222.72 L606.02,222.72 L620.12,222.72 L634.22,222.72 L648.32,222.72 L662.42,222.72 L676.52,222.72 L690.62,222.72 L704.72,222.72 L718.81,222.72 L732.91,222.72 L747.01,222.72 L761.11,222.72 L775.21,222.72 L789.31,222.72 L803.41,222.72 L817.51,222.72 L831.61,222.72 L845.7,222.72 L859.8,222.72 L873.9,222.72 L888,222.72 L902.1,222.72 L916.2,222.72 L930.3,222.72 L944.4,222.72 L958.5,222.72 L972.59,222.72 L986.69,222.72 L1000.79,222.72 L1014.89,222.72 L1028.99,222.72 L1043.09,222.72 L1057.19,222.72 L1071.29,222.72 L1085.39,222.72 L1099.48,222.72 L1113.58,222.72 L1127.68,222.72 L1141.78,222.72 L1155.88,222.72 L1169.98,222.72 L1184.08,222.72 L1198.18,222.72 L1212.28,222.72 L1226.37,222.72 L1240.47,222.72 L1254.57,222.72 L1268.67,222.72 L1282.77,222.72 L1296.87,222.72 L1310.97,222.72 L1325.07,222.72 L1339.17,222.72 L1353.26,222.72 L1367.36,222.72 L1381.46,222.72 L1395.56,222.72 L1409.66,222.72"/>
<path d="M487.68,173.88 L499.19,173.88 L510.7,173.88 L522.21,173.88 L533.73,173.88 L545.24,173.88 L556.75,173.88 L568.26,173.88 L579.77,173.88 L591.28,173.88 L602.8,173.88 L614.31,173.88 L625.82,173.88 L637.33,173.88 L648.84,173.88 L660.35,173.88 L671.87,173.88 L683.38,173.88 L694.89,173.88 L706.4,173.88 L717.91,173.88 L729.42,173.88 L740.94,173.88 L752.45,173.88 L763.96,173.88 L775.47,173.88 L786.98,173.88 L798.49,173.88 L810.01,173.88 L821.52,173.88 L833.03,173.88 L844.54,173.88 L856.05,173.88 L867.56,173.88 L879.08,173.88 L890.59,173.88 L902.1,173.88 L913.61,173.88 L925.12,173.88 L936.64,173.88 L948.15,173.88 L959.66,173.88 L971.17,173.88 L982.68,173.88 L994.19,173.88 L1005.71,173.88 L1017.22,173.88 L1028.73,173.88 L1040.24,173.88 L1051.75,173.88 L1063.26,173.88 L1074.78,173.88 L1086.29,173.88 L1097.8,173.88 L1109.31,173.88 L1120.82,173.88 L1132.33,173.88 L1143.85,173.88 L1155.36,173.88 L1166.87,173.88 L1178.38,173.88 L1189.89,173.88 L1201.4,173.88 L1212.92,173.88 L1224.43,173.88 L1235.94,173.88 L1247.45,173.88 L1258.96,173.88 L1270.47,173.88 L1281.99,173.88 L1293.5,173.88 L1305.01,173.88 L1316.52,173.88"/>
<path d="M609.06,125.04 L617.2,125.04 L625.34,125.04 L633.48,125.04 L641.62,125.04 L649.76,125.04 L657.9,125.04 L666.04,125.04 L674.18,125.04 L682.32,125.04 L690.46,125.04 L698.6,125.04 L706.74,125.04 L714.88,125.04 L723.02,125.04 L731.16,125.04 L739.3,125.04 L747.44,125.04 L755.58,125.04 L763.72,125.04 L771.86,125.04 L780,125.04 L788.14,125.04 L796.28,125.04 L804.42,125.04 L812.56,125.04 L820.7,125.04 L828.84,125.04 L836.98,125.04 L845.12,125.04 L853.26,125.04 L861.4,125.04 L869.54,125.04 L877.68,125.04 L885.82,125.04 L893.96,125.04 L902.1,125.04 L910.24,125.04 L918.38,125.04 L926.52,125.04 L934.66,125.04 L942.8,125.04 L950.94,125.04 L959.08,125.04 L967.22,125.04 L975.36,125.04 L983.5,125.04 L991.64,125.04 L999.78,125.04 L1007.92,125.04 L1016.06,125.04 L1024.2,125.04 L1032.34,125.04 L1040.48,125.04 L1048.62,125.04 L1056.76,125.04 L1064.9,125.04 L1073.04,125.04 L1081.18,125.04 L1089.32,125.04 L1097.46,125.04 L1105.6,125.04 L1113.74,125.04 L1121.88,125.04 L1130.02,125.04 L1138.16,125.04 L1146.3,125.04 L1154.44,125.04 L1162.58,125.04 L1170.72,125.04 L1178.86,125.04 L1187,125.04 L1195.14,125.04"/>
<path d="M750.41,76.2 L754.62,76.2 L758.84,76.2 L763.05,76.2 L767.27,76.2 L771.48,76.2 L775.69,76.2 L779.91,76.2 L784.12,76.2 L788.33,76.2 L792.55,76.2 L796.76,76.2 L800.97,76.2 L805.19,76.2 L809.4,76.2 L813.61,76.2 L817.83,76.2 L822.04,76.2 L826.26,76.2 L830.47,76.2 L834.68,76.2 L838.9,76.2 L843.11,76.2 L847.32,76.2 L851.54,76.2 L855.75,76.2 L859.96,76.2 L864.18,76.2 L868.39,76.2 L872.6,76.2 L876.82,76.2 L881.03,76.2 L885.25,76.2 L889.46,76.2 L893.67,76.2 L897.89,76.2 L902.1,76.2 L906.31,76.2 L910.53,76.2 L914.74,76.2 L918.95,76.2 L923.17,76.2 L927.38,76.2 L931.6,76.2 L935.81,76.2 L940.02,76.2 L944.24,76.2 L948.45,76.2 L952.66,76.2 L956.88,76.2 L961.09,76.2 L965.3,76.2 L969.52,76.2 L973.73,76.2 L977.94,76.2 L982.16,76.2 L986.37,76.2 L990.59,76.2 L994.8,76.2 L999.01,76.2 L1003.23,76.2 L1007.44,76.2 L1011.65,76.2 L1015.87,76.2 L1020.08,76.2 L1024.29,76.2 L1028.51,76.2 L1032.72,76.2 L1036.93,76.2 L1041.15,76.2 L1045.36,76.2 L1049.58,76.2 L1053.79,76.2"/>
</g>
<text x="1473.33" y="330" font-size="11.2" fill="#848484" textLength="26" lengthAdjust="spacingAndGlyphs">+180</text>
<circle cx="1503.13" cy="323.4" r="0.95" fill="none" stroke="#848484" stroke-width="0.7"/>
<text x="1375.65" y="330" font-size="11.2" fill="#848484" textLength="26" lengthAdjust="spacingAndGlyphs">+210</text>
<circle cx="1405.45" cy="323.4" r="0.95" fill="none" stroke="#848484" stroke-width="0.7"/>
<text x="1277.97" y="330" font-size="11.2" fill="#848484" textLength="26" lengthAdjust="spacingAndGlyphs">+240</text>
<circle cx="1307.77" cy="323.4" r="0.95" fill="none" stroke="#848484" stroke-width="0.7"/>
<text x="1180.29" y="330" font-size="11.2" fill="#848484" textLength="26" lengthAdjust="spacingAndGlyphs">+270</text>
<circle cx="1210.09" cy="323.4" r="0.95" fill="none" stroke="#848484" stroke-width="0.7"/>
<text x="1082.61" y="330" font-size="11.2" fill="#848484" textLength="26" lengthAdjust="spacingAndGlyphs">+300</text>
<circle cx="1112.41" cy="323.4" r="0.95" fill="none" stroke="#848484" stroke-width="0.7"/>
<text x="984.93" y="330" font-size="11.2" fill="#848484" textLength="26" lengthAdjust="spacingAndGlyphs">+330</text>
<circle cx="1014.73" cy="323.4" r="0.95" fill="none" stroke="#848484" stroke-width="0.7"/>
<text x="893.15" y="330" font-size="11.2" fill="#848484" textLength="14.2" lengthAdjust="spacingAndGlyphs">+0</text>
<circle cx="911.15" cy="323.4" r="0.95" fill="none" stroke="#848484" stroke-width="0.7"/>
<text x="792.52" y="330" font-size="11.2" fill="#848484" textLength="20.1" lengthAdjust="spacingAndGlyphs">+30</text>
<circle cx="816.42" cy="323.4" r="0.95" fill="none" stroke="#848484" stroke-width="0.7"/>
<text x="694.84" y="330" font-size="11.2" fill="#848484" textLength="20.1" lengthAdjust="spacingAndGlyphs">+60</text>
<circle cx="718.74" cy="323.4" r="0.95" fill="none" stroke="#848484" stroke-width="0.7"/>
<text x="597.16" y="330" font-size="11.2" fill="#848484" textLength="20.1" lengthAdjust="spacingAndGlyphs">+90</text>
<circle cx="621.06" cy="323.4" r="0.95" fill="none" stroke="#848484" stroke-width="0.7"/>
<text x="496.53" y="330" font-size="11.2" fill="#848484" textLength="26" lengthAdjust="spacingAndGlyphs">+120</text>
<circle cx="526.33" cy="323.4" r="0.95" fill="none" stroke="#848484" stroke-width="0.7"/>
<text x="398.85" y="330" font-size="11.2" fill="#848484" textLength="26" lengthAdjust="spacingAndGlyphs">+150</text>
<circle cx="428.65" cy="323.4" r="0.95" fill="none" stroke="#848484" stroke-width="0.7"/>
<text x="301.17" y="330" font-size="11.2" fill="#848484" textLength="26" lengthAdjust="spacingAndGlyphs">+180</text>
<circle cx="330.97" cy="323.4" r="0.95" fill="none" stroke="#848484" stroke-width="0.7"/>
<text x="890.2" y="25.26" font-size="11.2" fill="#848484" textLength="20.1" lengthAdjust="spacingAndGlyphs">+90</text>
<circle cx="914.1" cy="18.66" r="0.95" fill="none" stroke="#848484" stroke-width="0.7"/>
<text x="890.2" y="122.94" font-size="11.2" fill="#848484" textLength="20.1" lengthAdjust="spacingAndGlyphs">+60</text>
<circle cx="914.1" cy="116.34" r="0.95" fill="none" stroke="#848484" stroke-width="0.7"/>
<text x="890.2" y="220.62" font-size="11.2" fill="#848484" textLength="20.1" lengthAdjust="spacingAndGlyphs">+30</text>
<circle cx="914.1" cy="214.02" r="0.95" fill="none" stroke="#848484" stroke-width="0.7"/>
<text x="890.2" y="427.88" font-size="11.2" fill="#848484" textLength="20.1" lengthAdjust="spacingAndGlyphs">−30</text>
<circle cx="914.1" cy="421.28" r="0.95" fill="none" stroke="#848484" stroke-width="0.7"/>
<text x="890.2" y="525.56" font-size="11.2" fill="#848484" textLength="20.1" lengthAdjust="spacingAndGlyphs">−60</text>
<circle cx="914.1" cy="518.96" r="0.95" fill="none" stroke="#848484" stroke-width="0.7"/>
<text x="890.2" y="623.24" font-size="11.2" fill="#848484" textLength="20.1" lengthAdjust="spacingAndGlyphs">−90</text>
<circle cx="914.1" cy="616.64" r="0.95" fill="none" stroke="#848484" stroke-width="0.7"/>
<path d="M758.91,258.58 L758.13,258.59 L757.36,258.63 L756.57,258.69 L755.79,258.78 L754.99,258.89 L754.2,259.03 L753.41,259.19 L752.61,259.38 L751.81,259.59 L751.02,259.83 L750.22,260.08 L749.43,260.37 L748.64,260.67 L747.86,261 L747.08,261.35 L746.3,261.72 L745.54,262.12 L744.78,262.53 L744.03,262.97 L743.28,263.43 L742.55,263.9 L741.83,264.4 L741.12,264.91 L740.43,265.44 L739.75,265.99 L739.08,266.56 L738.43,267.14 L737.79,267.74 L737.18,268.36 L736.57,268.98 L735.99,269.63 L735.43,270.28 L734.88,270.95 L734.36,271.63 L733.86,272.32 L733.38,273.02 L732.92,273.73 L732.48,274.45 L732.07,275.18 L731.68,275.92 L731.32,276.66 L730.98,277.41 L730.66,278.16 L730.38,278.92 L730.11,279.68 L729.88,280.44 L729.67,281.21 L729.48,281.98 L729.32,282.75 L729.2,283.52 L729.09,284.28 L729.02,285.05 L728.97,285.81 L728.95,286.58 L728.95,287.33 L728.99,288.08 L729.05,288.83 L729.14,289.57 L729.25,290.31 L729.39,291.04 L729.56,291.75 L729.75,292.46 L729.97,293.17 L730.22,293.86 L730.49,294.54 L730.78,295.2 L731.1,295.86 L731.45,296.5 L731.81,297.13 L732.2,297.75 L732.62,298.35 L733.05,298.94 L733.51,299.51 L733.98,300.06 L734.48,300.6 L735,301.12 L735.53,301.63 L736.09,302.11 L736.66,302.58 L737.25,303.02 L737.85,303.45 L738.47,303.86 L739.11,304.24 L739.76,304.61 L740.42,304.96 L741.09,305.28 L741.78,305.58 L742.48,305.86 L743.18,306.12 L743.9,306.35 L744.63,306.56 L745.36,306.75 L746.1,306.92 L746.85,307.06 L747.6,307.18 L748.36,307.27 L749.12,307.35 L749.88,307.39 L750.65,307.42 L751.42,307.42 L752.19,307.39 L752.96,307.35 L753.73,307.27 L754.5,307.18 L755.26,307.06 L756.03,306.92 L756.79,306.75 L757.54,306.56 L758.29,306.35 L759.04,306.12 L759.78,305.86 L760.51,305.58 L761.24,305.28 L761.95,304.96 L762.66,304.61 L763.36,304.24 L764.05,303.86 L764.73,303.45 L765.4,303.02 L766.06,302.58 L766.7,302.11 L767.33,301.63 L767.95,301.12 L768.56,300.6 L769.15,300.06 L769.72,299.51 L770.28,298.94 L770.83,298.35 L771.36,297.75 L771.87,297.13 L772.37,296.5 L772.85,295.86 L773.31,295.2 L773.75,294.54 L774.18,293.86 L774.58,293.17 L774.97,292.46 L775.34,291.75 L775.69,291.04 L776.01,290.31 L776.32,289.57 L776.61,288.83 L776.88,288.08 L777.13,287.33 L777.35,286.58 L777.56,285.81 L777.74,285.05 L777.9,284.28 L778.04,283.52 L778.16,282.75 L778.25,281.98 L778.33,281.21 L778.38,280.44 L778.41,279.68 L778.42,278.92 L778.4,278.16 L778.36,277.41 L778.3,276.66 L778.22,275.92 L778.12,275.18 L777.99,274.45 L777.84,273.73 L777.67,273.02 L777.48,272.32 L777.26,271.63 L777.03,270.95 L776.77,270.28 L776.49,269.63 L776.19,268.98 L775.87,268.36 L775.53,267.74 L775.16,267.14 L774.78,266.56 L774.37,265.99 L773.95,265.44 L773.51,264.91 L773.05,264.4 L772.56,263.9 L772.07,263.43 L771.55,262.97 L771.01,262.53 L770.46,262.12 L769.89,261.72 L769.3,261.35 L768.7,261 L768.08,260.67 L767.45,260.37 L766.8,260.08 L766.14,259.83 L765.47,259.59 L764.78,259.38 L764.08,259.19 L763.37,259.03 L762.65,258.89 L761.92,258.78 L761.18,258.69 L760.43,258.63 L759.67,258.59 L758.91,258.58Z" fill="none" stroke="#55cc70" stroke-width="2.1"/>
<path d="M624,432 L632,415.3" fill="none" stroke="#50c46a" stroke-width="1.45"/>
<path d="M631.84,415.3 L632.96,412.94 L634.1,410.58 L635.26,408.23 L636.45,405.87 L637.66,403.51 L638.89,401.15 L640.14,398.8 L641.42,396.44 L642.72,394.08 L644.05,391.72 L645.4,389.37 L646.78,387.01 L648.18,384.65 L649.61,382.29 L651.06,379.94 L652.54,377.58 L654.04,375.22 L655.57,372.86 L657.13,370.51 L658.71,368.15 L660.33,365.79 L661.97,363.43 L663.63,361.07 L665.33,358.72 L667.06,356.36 L668.81,354 L670.59,351.64 L672.4,349.29 L674.25,346.93 L676.12,344.57 L678.02,342.21 L679.95,339.86 L681.92,337.5 L683.91,335.14 L685.94,332.78 L688,330.43 L690.09,328.07 L692.21,325.71 L694.37,323.35 L696.56,320.99 L698.78,318.64 L701.03,316.28 L703.32,313.92 L705.64,311.56 L708,309.21 L710.39,306.85 L712.82,304.49 L715.28,302.13 L717.78,299.78 L720.32,297.42 L722.89,295.06 L725.49,292.7 L728.14,290.35 L730.82,287.99 L733.53,285.63 L736.29,283.27 L739.08,280.92 L741.91,278.56 L744.78,276.2" fill="none" stroke="#50c46a" stroke-width="1.39" stroke-dasharray="1.39 2.29"/>
<circle cx="624" cy="432" r="1.3" fill="#f0502a"/>
<path d="M744.1,275.4 H750.9 M747.5,272 V278.8" stroke="#ff0000" stroke-width="1.5" fill="none"/>
<text x="754" y="286" font-size="11.8" fill="#fff" text-anchor="middle" textLength="20.58" lengthAdjust="spacingAndGlyphs">STA</text>
<text transform="translate(149.1,696.75) rotate(-90)" font-size="29.6" fill="#555555" textLength="54.17" lengthAdjust="spacingAndGlyphs">APR</text>
<text transform="translate(293.9,701.14) rotate(-90)" font-size="29.6" fill="#555555" textLength="56.41" lengthAdjust="spacingAndGlyphs">MAY</text>
<text transform="translate(436.1,690.8) rotate(-90)" font-size="29.6" fill="#555555" textLength="49.47" lengthAdjust="spacingAndGlyphs">JUN</text>
<text transform="translate(576.1,685.8) rotate(-90)" font-size="29.6" fill="#555555" textLength="45.55" lengthAdjust="spacingAndGlyphs">JUL</text>
<text transform="translate(722.7,700.55) rotate(-90)" font-size="29.6" fill="#555555" textLength="58.36" lengthAdjust="spacingAndGlyphs">AUG</text>
<text transform="translate(871.9,694.35) rotate(-90)" font-size="29.6" fill="#555555" textLength="50.79" lengthAdjust="spacingAndGlyphs">SEP</text>
<text transform="translate(1015.9,700.69) rotate(-90)" font-size="29.6" fill="#555555" textLength="57.52" lengthAdjust="spacingAndGlyphs">OCT</text>
<text transform="translate(1169.1,704.34) rotate(-90)" font-size="29.6" fill="#555555" textLength="59.16" lengthAdjust="spacingAndGlyphs">NOV</text>
<text transform="translate(1318.05,700.78) rotate(-90)" font-size="29.6" fill="#555555" textLength="56.09" lengthAdjust="spacingAndGlyphs">DEC</text>
<text transform="translate(1469.1,689.3) rotate(-90)" font-size="29.6" fill="#555555" textLength="47.97" lengthAdjust="spacingAndGlyphs">JAN</text>
<text transform="translate(1628.05,696.34) rotate(-90)" font-size="29.6" fill="#555555" textLength="50.82" lengthAdjust="spacingAndGlyphs">FEB</text>
<text transform="translate(1766.1,705.24) rotate(-90)" font-size="29.6" fill="#555555" textLength="60.81" lengthAdjust="spacingAndGlyphs">MAR</text>
<path d="M1077.5,842.5 V641.5" stroke="#ff0000" stroke-width="1.6" stroke-dasharray="5.14 2.22"/>
<path d="M108,834 H127 M166,834 H343 M367,834 H623 M637,834 H784 M809,834 H897 M922,834 H971 M986,834 H1064 M1084,834 H1201 M1246,834 H1324 M1339,834 H1354 M1383,834 H1442 M1461,834 H1510 M1525,834 H1545 M1726,834 H1746 M1761,834 H1780" stroke="#bddf26" stroke-width="4.17" stroke-linecap="square" fill="none"/>
<path d="M166,818 H186 M225,818 H284 M314,818 H338 M367,818 H490 M510,818 H652 M706,818 H735 M775,818 H843 M873,818 H986 M1005,818 H1015 M1064,818 H1211 M1246,818 H1265 M1295,818 H1314 M1344,818 H1363 M1388,818 H1427 M1461,818 H1481 M1550,818 H1569" stroke="#81d34d" stroke-width="4.17" stroke-linecap="square" fill="none"/>
<path d="M166,802 H186 M260,802 H485 M510,802 H613 M627,802 H716 M731,802 H824 M951,802 H1147 M1162,802 H1246 M1260,802 H1442 M1461,802 H1481 M1555,802 H1574" stroke="#4ec36b" stroke-width="4.17" stroke-linecap="square" fill="none"/>
<path d="M196,785 H215 M323,785 H505 M520,785 H539 M559,785 H681 M809,785 H829 M956,785 H971 M991,785 H1123 M1157,785 H1216 M1246,785 H1265 M1319,785 H1339 M1398,785 H1417 M1466,785 H1648" stroke="#2ab07f" stroke-width="4.17" stroke-linecap="square" fill="none"/>
<path d="M343,769 H367 M412,769 H446 M471,769 H490 M529,769 H544 M564,769 H588 M618,769 H647 M961,769 H986 M1064,769 H1084 M1103,769 H1123 M1162,769 H1192 M1250,769 H1270 M1427,769 H1510" stroke="#1e9b8a" stroke-width="4.17" stroke-linecap="square" fill="none"/>
<path d="M421,752 H441 M534,752 H554 M569,752 H588 M623,752 H740 M971,752 H1133 M1187,752 H1344 M1471,752 H1491" stroke="#25858e" stroke-width="4.17" stroke-linecap="square" fill="none"/>
<path d="M431,736 H451 M578,736 H731 M995,736 H1103 M1118,736 H1221 M1265,736 H1290 M1491,736 H1510" stroke="#2d708e" stroke-width="4.17" stroke-linecap="square" fill="none"/>
<path d="M593,720 H613 M657,720 H770 M1074,720 H1241 M1265,720 H1285" stroke="#375a8c" stroke-width="4.17" stroke-linecap="square" fill="none"/>
<path d="M598,703 H731 M1094,703 H1118 M1201,703 H1221 M1275,703 H1324" stroke="#424086" stroke-width="4.17" stroke-linecap="square" fill="none"/>
<path d="M1113,687 H1133" stroke="#482475" stroke-width="4.17" stroke-linecap="square" fill="none"/>
<path d="M74,842.5 V641.5 M218,842.5 V641.5 M365,842.5 V641.5 M505,842.5 V641.5 M650,842.5 V641.5 M797,842.5 V641.5 M940,842.5 V641.5 M1091,842.5 V641.5 M1239,842.5 V641.5 M1394,842.5 V641.5 M1548,842.5 V641.5 M1687,842.5 V641.5" stroke="#ffffff" stroke-opacity="0.36" stroke-width="2.08" stroke-dasharray="2.083 3.4375" stroke-dashoffset="-0.96" fill="none"/>
<path d="M113,834 H121 M117,830 V838 M241,834 H249 M245,830 V838 M511,834 H519 M515,830 V838 M707,834 H715 M711,830 V838 M833,834 H841 M837,830 V838 M962,834 H970 M966,830 V838 M986,834 H994 M990,830 V838 M1116,834 H1124 M1120,830 V838 M1295,834 H1303 M1299,830 V838 M1342,834 H1350 M1346,830 V838 M1413,834 H1421 M1417,830 V838 M1482,834 H1490 M1486,830 V838 M1531,834 H1539 M1535,830 V838 M1732,834 H1740 M1736,830 V838 M1766,834 H1774 M1770,830 V838 M172,818 H180 M176,814 V822 M256,818 H264 M260,814 V822 M323,818 H331 M327,814 V822 M437,818 H445 M441,814 V822 M599,818 H607 M603,814 V822 M717,818 H725 M721,814 V822 M793,818 H801 M797,814 V822 M939,818 H947 M943,814 V822 M1006,818 H1014 M1010,814 V822 M1153,818 H1161 M1157,814 V822 M1251,818 H1259 M1255,814 V822 M1300,818 H1308 M1304,814 V822 M1349,818 H1357 M1353,814 V822 M1403,818 H1411 M1407,814 V822 M1467,818 H1475 M1471,814 V822 M1555,818 H1563 M1559,814 V822 M174,802 H182 M178,798 V806 M378,802 H386 M382,798 V806 M545,802 H553 M549,798 V806 M682,802 H690 M686,798 V806 M741,802 H749 M745,798 V806 M1074,802 H1082 M1078,798 V806 M1217,802 H1225 M1221,798 V806 M1305,802 H1313 M1309,798 V806 M1467,802 H1475 M1471,798 V806 M1560,802 H1568 M1564,798 V806 M202,785 H210 M206,781 V789 M400,785 H408 M404,781 V789 M525,785 H533 M529,781 V789 M639,785 H647 M643,781 V789 M815,785 H823 M819,781 V789 M959,785 H967 M963,781 V789 M1040,785 H1048 M1044,781 V789 M1188,785 H1196 M1192,781 V789 M1251,785 H1259 M1255,781 V789 M1325,785 H1333 M1329,781 V789 M1403,785 H1411 M1407,781 V789 M1546,785 H1554 M1550,781 V789 M356,769 H364 M360,765 V773 M426,769 H434 M430,765 V773 M476,769 H484 M480,765 V773 M535,769 H543 M539,765 V773 M571,769 H579 M575,765 V773 M631,769 H639 M635,765 V773 M974,769 H982 M978,765 V773 M1070,769 H1078 M1074,765 V773 M1109,769 H1117 M1113,765 V773 M1178,769 H1186 M1182,765 V773 M1256,769 H1264 M1260,765 V773 M1467,769 H1475 M1471,765 V773 M427,752 H435 M431,748 V756 M540,752 H548 M544,748 V756 M574,752 H582 M578,748 V756 M704,752 H712 M708,748 V756 M1094,752 H1102 M1098,748 V756 M1271,752 H1279 M1275,748 V756 M1477,752 H1485 M1481,748 V756 M437,736 H445 M441,732 V740 M631,736 H639 M635,732 V740 M1039,736 H1047 M1043,732 V740 M1168,736 H1176 M1172,732 V740 M1275,736 H1283 M1279,732 V740 M1497,736 H1505 M1501,732 V740 M599,720 H607 M603,716 V724 M727,720 H735 M731,716 V724 M1188,720 H1196 M1192,716 V724 M1271,720 H1279 M1275,716 V724 M687,703 H695 M691,699 V707 M1102,703 H1110 M1106,699 V707 M1207,703 H1215 M1211,699 V707 M1300,703 H1308 M1304,699 V707 M1119,687 H1127 M1123,683 V691" stroke="#fff" stroke-width="2.1" fill="none"/>
<g font-size="11.4" fill="#fff" text-anchor="middle"><text x="117.31" y="831.3" textLength="19.86" lengthAdjust="spacingAndGlyphs">KSE</text><text x="254.67" y="831.3" textLength="19.11" lengthAdjust="spacingAndGlyphs">ETA</text><text x="495.04" y="831.3" textLength="22.02" lengthAdjust="spacingAndGlyphs">NZC</text><text x="710.88" y="831.3" textLength="22.57" lengthAdjust="spacingAndGlyphs">NDA</text><text x="853.14" y="831.3" textLength="19.32" lengthAdjust="spacingAndGlyphs">SPE</text><text x="946.35" y="831.3" textLength="22.2" lengthAdjust="spacingAndGlyphs">ARD</text><text x="1024.84" y="831.3" textLength="21.06" lengthAdjust="spacingAndGlyphs">EGE</text><text x="1142.57" y="831.3" textLength="20.31" lengthAdjust="spacingAndGlyphs">NTA</text><text x="1284.83" y="831.3" textLength="24.78" lengthAdjust="spacingAndGlyphs">MON</text><text x="1343.7" y="831.3" textLength="21.3" lengthAdjust="spacingAndGlyphs">URS</text><text x="1412.38" y="831.3" textLength="21.15" lengthAdjust="spacingAndGlyphs">AHY</text><text x="1485.96" y="831.3" textLength="24.48" lengthAdjust="spacingAndGlyphs">GUM</text><text x="1535.02" y="831.3" textLength="22.21" lengthAdjust="spacingAndGlyphs">OHY</text><text x="1736.14" y="831.3" textLength="21.38" lengthAdjust="spacingAndGlyphs">XHE</text><text x="1770.48" y="831.3" textLength="16.64" lengthAdjust="spacingAndGlyphs">EVI</text><text x="176.18" y="815.3" textLength="20.57" lengthAdjust="spacingAndGlyphs">AVB</text><text x="254.67" y="815.3" textLength="17.23" lengthAdjust="spacingAndGlyphs">ELY</text><text x="323.34" y="815.3" textLength="23.2" lengthAdjust="spacingAndGlyphs">CAM</text><text x="431.27" y="815.3" textLength="21.12" lengthAdjust="spacingAndGlyphs">SSG</text><text x="578.43" y="815.3" textLength="20.51" lengthAdjust="spacingAndGlyphs">PCA</text><text x="720.69" y="815.3" textLength="22.59" lengthAdjust="spacingAndGlyphs">AUD</text><text x="808.99" y="815.3" textLength="21.81" lengthAdjust="spacingAndGlyphs">AUR</text><text x="931.63" y="815.3" textLength="21.59" lengthAdjust="spacingAndGlyphs">DSX</text><text x="1010.12" y="815.3" textLength="22.91" lengthAdjust="spacingAndGlyphs">OCU</text><text x="1137.67" y="815.3" textLength="21.84" lengthAdjust="spacingAndGlyphs">OER</text><text x="1255.4" y="815.3" textLength="22.69" lengthAdjust="spacingAndGlyphs">DKD</text><text x="1304.46" y="815.3" textLength="21.58" lengthAdjust="spacingAndGlyphs">DSV</text><text x="1353.51" y="815.3" textLength="17.77" lengthAdjust="spacingAndGlyphs">ALY</text><text x="1407.47" y="815.3" textLength="15.33" lengthAdjust="spacingAndGlyphs">JLE</text><text x="1471.24" y="815.3" textLength="20.99" lengthAdjust="spacingAndGlyphs">SCC</text><text x="1559.54" y="815.3" textLength="19.54" lengthAdjust="spacingAndGlyphs">FEV</text><text x="176.18" y="799.3" textLength="17.88" lengthAdjust="spacingAndGlyphs">LYR</text><text x="372.4" y="799.3" textLength="19.18" lengthAdjust="spacingAndGlyphs">JMC</text><text x="558.81" y="799.3" textLength="15.81" lengthAdjust="spacingAndGlyphs">JPE</text><text x="671.64" y="799.3" textLength="20.2" lengthAdjust="spacingAndGlyphs">PAU</text><text x="774.66" y="799.3" textLength="17.85" lengthAdjust="spacingAndGlyphs">NIA</text><text x="1049.37" y="799.3" textLength="19.14" lengthAdjust="spacingAndGlyphs">STA</text><text x="1206.34" y="799.3" textLength="24" lengthAdjust="spacingAndGlyphs">NOO</text><text x="1353.51" y="799.3" textLength="24.26" lengthAdjust="spacingAndGlyphs">COM</text><text x="1471.24" y="799.3" textLength="22.16" lengthAdjust="spacingAndGlyphs">NCC</text><text x="1564.45" y="799.3" textLength="20.43" lengthAdjust="spacingAndGlyphs">FED</text><text x="205.61" y="782.3" textLength="17.89" lengthAdjust="spacingAndGlyphs">HVI</text><text x="411.64" y="782.3" textLength="17.3" lengthAdjust="spacingAndGlyphs">ARI</text><text x="529.38" y="782.3" textLength="20.85" lengthAdjust="spacingAndGlyphs">SZC</text><text x="617.68" y="782.3" textLength="20.51" lengthAdjust="spacingAndGlyphs">CAP</text><text x="818.81" y="782.3" textLength="21.82" lengthAdjust="spacingAndGlyphs">NUE</text><text x="961.07" y="782.3" textLength="21.66" lengthAdjust="spacingAndGlyphs">OCT</text><text x="1059.18" y="782.3" textLength="18.36" lengthAdjust="spacingAndGlyphs">ORI</text><text x="1186.72" y="782.3" textLength="24.12" lengthAdjust="spacingAndGlyphs">AMO</text><text x="1255.4" y="782.3" textLength="21.4" lengthAdjust="spacingAndGlyphs">DPC</text><text x="1328.98" y="782.3" textLength="17.19" lengthAdjust="spacingAndGlyphs">XVI</text><text x="1407.47" y="782.3" textLength="22.76" lengthAdjust="spacingAndGlyphs">QUA</text><text x="1559.54" y="782.3" textLength="22.15" lengthAdjust="spacingAndGlyphs">AAN</text><text x="352.78" y="766.3" textLength="20.35" lengthAdjust="spacingAndGlyphs">TAH</text><text x="431.27" y="766.3" textLength="16.64" lengthAdjust="spacingAndGlyphs">JEA</text><text x="480.32" y="766.3" textLength="12.33" lengthAdjust="spacingAndGlyphs">JIP</text><text x="539.19" y="766.3" textLength="19.02" lengthAdjust="spacingAndGlyphs">PPS</text><text x="578.43" y="766.3" textLength="20.85" lengthAdjust="spacingAndGlyphs">ZCS</text><text x="632.39" y="766.3" textLength="23.14" lengthAdjust="spacingAndGlyphs">GDR</text><text x="970.88" y="766.3" textLength="21.79" lengthAdjust="spacingAndGlyphs">DRA</text><text x="1073.89" y="766.3" textLength="21.72" lengthAdjust="spacingAndGlyphs">LUM</text><text x="1113.14" y="766.3" textLength="20.97" lengthAdjust="spacingAndGlyphs">RPU</text><text x="1176.91" y="766.3" textLength="21.15" lengthAdjust="spacingAndGlyphs">THA</text><text x="1260.31" y="766.3" textLength="20.35" lengthAdjust="spacingAndGlyphs">PSU</text><text x="1471.24" y="766.3" textLength="20.63" lengthAdjust="spacingAndGlyphs">XCB</text><text x="431.27" y="749.3" textLength="16.93" lengthAdjust="spacingAndGlyphs">JRC</text><text x="544.09" y="749.3" textLength="22.01" lengthAdjust="spacingAndGlyphs">CAN</text><text x="578.43" y="749.3" textLength="19.8" lengthAdjust="spacingAndGlyphs">FAN</text><text x="681.45" y="749.3" textLength="19.94" lengthAdjust="spacingAndGlyphs">PER</text><text x="1049.37" y="749.3" textLength="19.79" lengthAdjust="spacingAndGlyphs">CTA</text><text x="1265.21" y="749.3" textLength="22.04" lengthAdjust="spacingAndGlyphs">HYD</text><text x="1481.06" y="749.3" textLength="23.55" lengthAdjust="spacingAndGlyphs">XUM</text><text x="441.08" y="733.3" textLength="22.53" lengthAdjust="spacingAndGlyphs">COR</text><text x="656.92" y="733.3" textLength="21.4" lengthAdjust="spacingAndGlyphs">SDA</text><text x="1049.37" y="733.3" textLength="17.72" lengthAdjust="spacingAndGlyphs">LMI</text><text x="1167.1" y="733.3" textLength="20.42" lengthAdjust="spacingAndGlyphs">LEO</text><text x="1275.02" y="733.3" textLength="20.61" lengthAdjust="spacingAndGlyphs">EHY</text><text x="1500.68" y="733.3" textLength="20.81" lengthAdjust="spacingAndGlyphs">ECV</text><text x="602.96" y="717.3" textLength="17.19" lengthAdjust="spacingAndGlyphs">JXA</text><text x="715.79" y="717.3" textLength="21.43" lengthAdjust="spacingAndGlyphs">KCG</text><text x="1157.29" y="717.3" textLength="22.75" lengthAdjust="spacingAndGlyphs">AND</text><text x="1275.02" y="717.3" textLength="22.8" lengthAdjust="spacingAndGlyphs">DAD</text><text x="666.73" y="700.3" textLength="16.76" lengthAdjust="spacingAndGlyphs">ERI</text><text x="1108.23" y="700.3" textLength="20.27" lengthAdjust="spacingAndGlyphs">SLD</text><text x="1211.25" y="700.3" textLength="21.87" lengthAdjust="spacingAndGlyphs">ORS</text><text x="1299.55" y="700.3" textLength="23.45" lengthAdjust="spacingAndGlyphs">GEM</text><text x="1122.95" y="684.3" textLength="22.98" lengthAdjust="spacingAndGlyphs">KUM</text></g>
<rect x="19.5" y="641.5" width="1766" height="201" fill="none" stroke="#fff" stroke-width="1.11"/>
<path d="M19.5,842.5 V847.36 M264.5,842.5 V847.36 M510.5,842.5 V847.36 M755.5,842.5 V847.36 M1000.5,842.5 V847.36 M1246.5,842.5 V847.36 M1491.5,842.5 V847.36 M1736.5,842.5 V847.36" stroke="#fff" stroke-width="1.11"/>
<text x="19.2" y="861.9" font-size="14.7" fill="#fff" text-anchor="middle" textLength="8.4" lengthAdjust="spacingAndGlyphs">0</text>
<text x="264.48" y="861.9" font-size="14.7" fill="#fff" text-anchor="middle" textLength="16.79" lengthAdjust="spacingAndGlyphs">50</text>
<text x="509.76" y="861.9" font-size="14.7" fill="#fff" text-anchor="middle" textLength="25.19" lengthAdjust="spacingAndGlyphs">100</text>
<text x="755.03" y="861.9" font-size="14.7" fill="#fff" text-anchor="middle" textLength="25.19" lengthAdjust="spacingAndGlyphs">150</text>
<text x="1000.31" y="861.9" font-size="14.7" fill="#fff" text-anchor="middle" textLength="25.19" lengthAdjust="spacingAndGlyphs">200</text>
<text x="1245.59" y="861.9" font-size="14.7" fill="#fff" text-anchor="middle" textLength="25.19" lengthAdjust="spacingAndGlyphs">250</text>
<text x="1490.87" y="861.9" font-size="14.7" fill="#fff" text-anchor="middle" textLength="25.19" lengthAdjust="spacingAndGlyphs">300</text>
<text x="1736.14" y="861.9" font-size="14.7" fill="#fff" text-anchor="middle" textLength="25.19" lengthAdjust="spacingAndGlyphs">350</text>
<text x="902.5" y="882.1" font-size="14.7" fill="#fff" text-anchor="middle" textLength="146.7" lengthAdjust="spacingAndGlyphs">Solar longitude (deg)</text>
</svg></body></html>
